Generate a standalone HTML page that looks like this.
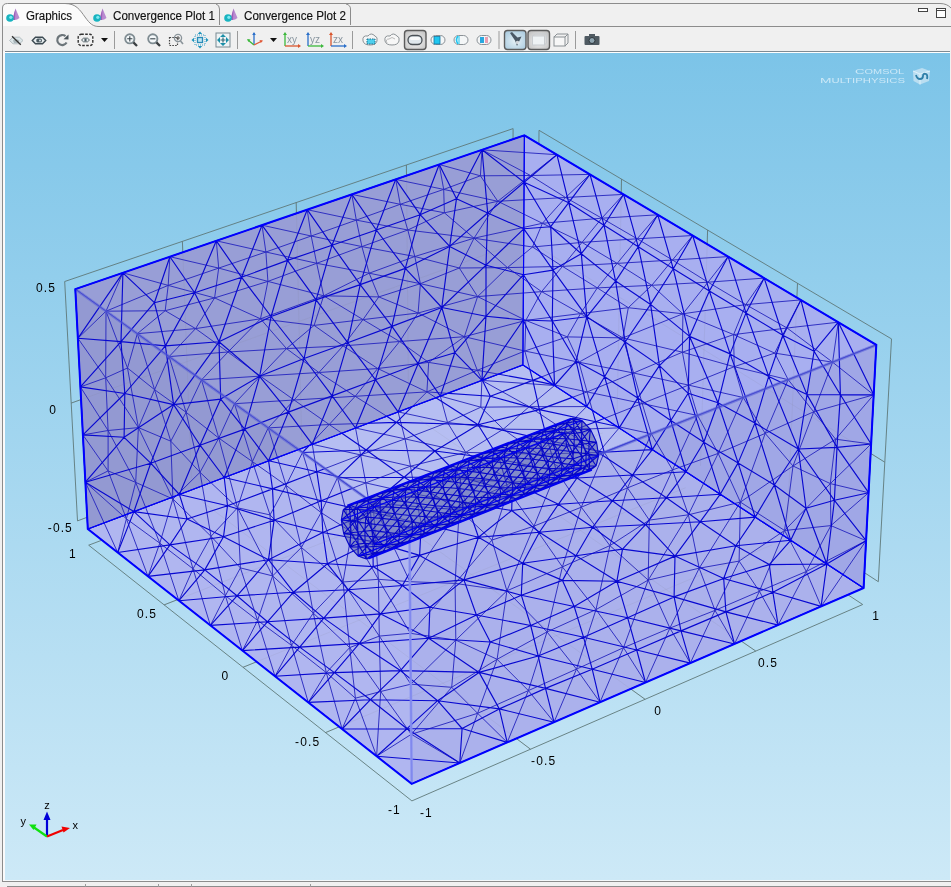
<!DOCTYPE html><html><head><meta charset="utf-8"><style>html,body{margin:0;padding:0;width:951px;height:887px;overflow:hidden;background:#f0f0f0}svg{display:block;will-change:transform}text{font-family:"Liberation Sans",sans-serif}</style></head><body><svg width="951" height="887" viewBox="0 0 951 887"><defs><linearGradient id="bg" x1="0" y1="0" x2="0" y2="1"><stop offset="0" stop-color="#7cc4e8"/><stop offset="1" stop-color="#cde9f7"/></linearGradient></defs><rect width="951" height="887" fill="#f0f0f0"/><rect x="3" y="4" width="945" height="22" fill="#f0f0f0"/><path d="M3 26 V8 Q3 4 7 4 H65 C76 4 80 10 85 17 C90 24 93 26 99 26 Z" fill="#fbfbfb"/><path d="M2.5 884 V8 Q2.5 3.5 7.5 3.5 H940 Q947 3.5 951 8" fill="none" stroke="#8c8c8c" stroke-width="1"/><path d="M65 3.5 C76 3.5 80 10 85 17 C90 24 93 26.5 99 26.5 H951" fill="none" stroke="#8c8c8c" stroke-width="1"/><path d="M219.5 25 V9 Q219.5 5 216 4" fill="none" stroke="#8c8c8c" stroke-width="1"/><path d="M350.5 25 V9 Q350.5 5 346 4" fill="none" stroke="#8c8c8c" stroke-width="1"/><g transform="translate(7,8)"><path d="M8.5 0.5 L5.5 11.5 Q9 13 12.5 10 Z" fill="#b98ad0"/><path d="M8.5 0.5 L5.5 11.5 Q7 12 8 12 Z" fill="#9c5fb8"/><circle cx="3" cy="10" r="3.8" fill="#18b4c0"/><circle cx="3.8" cy="9.3" r="1.6" fill="#7fe8f0"/></g><g transform="translate(94,8)"><path d="M8.5 0.5 L5.5 11.5 Q9 13 12.5 10 Z" fill="#b98ad0"/><path d="M8.5 0.5 L5.5 11.5 Q7 12 8 12 Z" fill="#9c5fb8"/><circle cx="3" cy="10" r="3.8" fill="#18b4c0"/><circle cx="3.8" cy="9.3" r="1.6" fill="#7fe8f0"/></g><g transform="translate(225,8)"><path d="M8.5 0.5 L5.5 11.5 Q9 13 12.5 10 Z" fill="#b98ad0"/><path d="M8.5 0.5 L5.5 11.5 Q7 12 8 12 Z" fill="#9c5fb8"/><circle cx="3" cy="10" r="3.8" fill="#18b4c0"/><circle cx="3.8" cy="9.3" r="1.6" fill="#7fe8f0"/></g><text x="26" y="20" font-size="12" fill="#111" stroke="#111" stroke-width="0.15" textLength="46" lengthAdjust="spacingAndGlyphs">Graphics</text><text x="113" y="20" font-size="12" fill="#111" stroke="#111" stroke-width="0.15" textLength="102" lengthAdjust="spacingAndGlyphs">Convergence Plot 1</text><text x="244" y="20" font-size="12" fill="#111" stroke="#111" stroke-width="0.15" textLength="102" lengthAdjust="spacingAndGlyphs">Convergence Plot 2</text><rect x="918.5" y="8.5" width="9" height="3" fill="#fff" stroke="#444" stroke-width="1"/><rect x="936.5" y="8.5" width="9" height="9" fill="#fff" stroke="#444" stroke-width="1"/><line x1="936.5" y1="10.5" x2="945.5" y2="10.5" stroke="#444" stroke-width="1"/><g><path d="M9.5 40.5 L13 37.2 H19.5 L23 40.5 L19.5 43.8 H13Z" fill="#dce6e8" stroke="#b4bec2" stroke-width="1"/><path d="M13 40.5 Q16 38 19.5 40.5 L18 43 H14Z" fill="#a9b6ba"/><line x1="12" y1="36.3" x2="20.8" y2="44.7" stroke="#333" stroke-width="1.3"/></g><g><path d="M32.3 40.5 L35.5 37.3 H42.5 L45.7 40.5 L42.5 43.7 H35.5Z" fill="#e8eef0" stroke="#3c4a52" stroke-width="1.4"/><rect x="36.3" y="38.6" width="5.6" height="3.8" rx="1.5" fill="#4a5a62"/><circle cx="40" cy="40.5" r="0.9" fill="#e8f0f4"/></g><g><path d="M65.5 36.2 A5 5 0 1 0 66.6 42.5" fill="none" stroke="#6c757a" stroke-width="2.2"/><path d="M63.5 39.2 L68.5 34.5 L68.5 39.5Z" fill="#4a545a"/></g><g><rect x="78.2" y="34.3" width="14.6" height="11.2" rx="3" fill="none" stroke="#333" stroke-width="1.4" stroke-dasharray="2.6 1.4"/><path d="M81.5 40 L83.5 38.2 H87.5 L89.5 40 L87.5 41.8 H83.5Z" fill="#e6ecee" stroke="#58646a" stroke-width="1"/><circle cx="85.5" cy="40" r="1.2" fill="#4a5860"/></g><path d="M101 38 H108 L104.5 42 Z" fill="#111"/><line x1="114.5" y1="31" x2="114.5" y2="49" stroke="#9a9a9a" stroke-width="1"/><g transform="translate(129.8,38.8)"><circle r="4.6" fill="#f4f8fa" stroke="#7f8c92" stroke-width="1.9"/><path d="M-2.6 0H2.6M0 -2.6V2.6" stroke="#3a464c" stroke-width="1.1"/><line x1="3.6" y1="3.6" x2="7.2" y2="7.2" stroke="#3a3f42" stroke-width="2.3"/></g><g transform="translate(152.8,38.8)"><circle r="4.6" fill="#f4f8fa" stroke="#7f8c92" stroke-width="1.9"/><path d="M-2.6 0H2.6" stroke="#3a464c" stroke-width="1.1"/><line x1="3.6" y1="3.6" x2="7.2" y2="7.2" stroke="#3a3f42" stroke-width="2.3"/></g><g transform="translate(176,40)"><rect x="-6.5" y="-2.5" width="8" height="8" fill="none" stroke="#444" stroke-width="1.2" stroke-dasharray="1.6 1.2"/><circle cx="2" cy="-2" r="3.6" fill="none" stroke="#8a949a" stroke-width="1.3"/><path d="M0 -2H4M2 -4V0" stroke="#555" stroke-width="1"/><line x1="4.5" y1="1" x2="7" y2="4" stroke="#8a949a" stroke-width="1.6"/></g><g transform="translate(200,40)"><rect x="-2.5" y="-2.5" width="5" height="5" fill="#bfe6f4" stroke="#2a8cb8" stroke-width="1.3"/><rect x="-5" y="-5" width="10" height="10" fill="none" stroke="#3aa0c8" stroke-width="1" stroke-dasharray="1 1"/><path d="M0 -8.5 L-2.2 -6 H2.2Z M0 8.5 L-2.2 6 H2.2Z M-8.5 0 L-6 -2.2 V2.2Z M8.5 0 L6 -2.2 V2.2Z" fill="#1e95bd"/></g><g transform="translate(223,40)"><rect x="-7" y="-7" width="14" height="14" fill="#eef4f6" stroke="#7a8a92" stroke-width="1"/><path d="M0 -6 L-3 -3 H3Z M0 6 L-3 3 H3Z M-6 0 L-3 -3 V3Z M6 0 L3 -3 V3Z" fill="#1b8fa8"/><path d="M-2.5 0H2.5M0 -2.5V2.5" stroke="#3a6a78" stroke-width="1.2"/></g><line x1="237.5" y1="31" x2="237.5" y2="49" stroke="#9a9a9a" stroke-width="1"/><g transform="translate(254,40)"><path d="M0 5 V-7" stroke="#2a6fc9" stroke-width="1.3"/><path d="M0 -8 L-1.8 -5 H1.8Z" fill="#2a6fc9"/><path d="M0 5 L-6 0" stroke="#3cb83c" stroke-width="1.3"/><path d="M-7 -1 L-3.5 -0.5 L-5.5 2Z" fill="#3cb83c"/><path d="M0 5 L8 1" stroke="#e05a3a" stroke-width="1.3"/><path d="M9 0.5 L5.5 0 L6.8 3Z" fill="#e05a3a"/></g><path d="M270 38 H277 L273.5 42 Z" fill="#111"/><g transform="translate(292,40)"><path d="M-7 -6V6" stroke="#3cb83c" stroke-width="1.3"/><path d="M-7 -8 L-9 -5 H-5Z" fill="#3cb83c"/><path d="M-7 6H7" stroke="#d9552e" stroke-width="1.3"/><path d="M9 6 L6 4 V8Z" fill="#d9552e"/><text x="-5" y="2.5" font-size="10" fill="#8a96a0">xy</text></g><g transform="translate(315,40)"><path d="M-7 -6V6" stroke="#2a6fc9" stroke-width="1.3"/><path d="M-7 -8 L-9 -5 H-5Z" fill="#2a6fc9"/><path d="M-7 6H7" stroke="#3cb83c" stroke-width="1.3"/><path d="M9 6 L6 4 V8Z" fill="#3cb83c"/><text x="-5" y="2.5" font-size="10" fill="#8a96a0">yz</text></g><g transform="translate(338,40)"><path d="M-7 -6V6" stroke="#d9552e" stroke-width="1.3"/><path d="M-7 -8 L-9 -5 H-5Z" fill="#d9552e"/><path d="M-7 6H7" stroke="#2a6fc9" stroke-width="1.3"/><path d="M9 6 L6 4 V8Z" fill="#2a6fc9"/><text x="-5" y="2.5" font-size="10" fill="#8a96a0">zx</text></g><line x1="352.5" y1="31" x2="352.5" y2="49" stroke="#9a9a9a" stroke-width="1"/><g transform="translate(370,40)"><path d="M-7 1 Q-8 -5 -2 -4 Q1 -8 5 -4 Q8 -3 7 1 Q6 5 0 5 Q-6 5 -7 1Z" fill="#f3f5f6" stroke="#8c9296" stroke-width="1"/><rect x="-3" y="-1" width="8" height="5" fill="#4fd0ee" stroke="#1a6e8c" stroke-width="1" stroke-dasharray="1.5 1"/></g><g transform="translate(392,40)"><path d="M-7 1 Q-8 -5 -2 -4 Q1 -8 5 -4 Q8 -3 7 1 Q6 5 0 5 Q-6 5 -7 1Z" fill="#f7f7f7" stroke="#8c9296" stroke-width="1"/><path d="M-5 3 Q-7 -1 -3 -1 Q0 -4 3 -1" fill="none" stroke="#aaa" stroke-width="0.8"/></g><defs><radialGradient id="pg404" cx="0.5" cy="0.55" r="0.6"><stop offset="0" stop-color="#f6f6f6"/><stop offset="1" stop-color="#c8c8c8"/></radialGradient></defs><rect x="404.5" y="30.5" width="21.5" height="19" rx="3" fill="url(#pg404)" stroke="#5c5c5c" stroke-width="1.4"/><g transform="translate(415,40)"><rect x="-7" y="-4.5" width="14" height="9" rx="4.5" fill="#dfe7ec" stroke="#4a5056" stroke-width="1.3"/><rect x="-5" y="-3" width="10" height="3" rx="1.5" fill="#fff" opacity="0.8"/></g><g transform="translate(438,40)"><rect x="-7" y="-4.5" width="14" height="9" rx="4.5" fill="#f4f6f7" stroke="#8b9196" stroke-width="1"/><rect x="-4" y="-3.5" width="6" height="7.5" fill="#1ec6f0" stroke="#1276a0" stroke-width="0.8"/></g><g transform="translate(461,40)"><rect x="-7" y="-4.5" width="14" height="9" rx="4.5" fill="#f4f6f7" stroke="#8b9196" stroke-width="1"/><path d="M-3 -4 Q-6 0 -3 4" fill="none" stroke="#1ec6f0" stroke-width="1.6"/><line x1="-2" y1="-4" x2="-2" y2="4" stroke="#1ec6f0" stroke-width="1"/></g><g transform="translate(484,40)"><rect x="-7" y="-4.5" width="14" height="9" rx="4.5" fill="#f4f6f7" stroke="#8b9196" stroke-width="1"/><rect x="-4" y="-3" width="4" height="6" fill="#2aa8e0"/><rect x="1" y="-3" width="3" height="6" fill="#e58aa0" opacity="0.8"/></g><line x1="499" y1="31" x2="499" y2="49" stroke="#9a9a9a" stroke-width="1"/><defs><radialGradient id="pg504" cx="0.5" cy="0.55" r="0.6"><stop offset="0" stop-color="#e4f0f6"/><stop offset="1" stop-color="#aecde0"/></radialGradient></defs><rect x="504.5" y="30.5" width="21.5" height="19" rx="3" fill="url(#pg504)" stroke="#5c5c5c" stroke-width="1.4"/><path d="M510 33 L512 32 L517.5 37.5 L521.5 36.5 L517 46 L515 40.5 Z" fill="#4a5866"/><circle cx="517.5" cy="42.5" r="1.8" fill="#f0f4f8" opacity="0.8"/><defs><radialGradient id="pg528" cx="0.5" cy="0.55" r="0.6"><stop offset="0" stop-color="#f4f4f4"/><stop offset="1" stop-color="#c4c4c4"/></radialGradient></defs><rect x="528" y="30.5" width="21.5" height="19" rx="3" fill="url(#pg528)" stroke="#5c5c5c" stroke-width="1.4"/><g transform="translate(538.5,40)"><rect x="-6" y="-4" width="12" height="9" fill="#eef2f4" stroke="#c8ccd0" stroke-width="1"/><path d="M-6 -4 L-4 -6 H8 V3 L6 5" fill="none" stroke="#c8ccd0" stroke-width="1"/></g><g transform="translate(561,40)"><rect x="-7" y="-3" width="11" height="9" fill="#f7f7f7" stroke="#8a9094" stroke-width="1"/><path d="M-7 -3 L-4 -6 H7 V3 L4 6 M4 -3 L7 -6" fill="none" stroke="#8a9094" stroke-width="1"/></g><line x1="575.5" y1="31" x2="575.5" y2="49" stroke="#9a9a9a" stroke-width="1"/><g transform="translate(592,40)"><rect x="-7.5" y="-4" width="15" height="9" rx="1" fill="#4f5a62"/><rect x="-3" y="-6" width="6" height="3" fill="#4f5a62"/><circle cy="0.5" r="3" fill="#8ea4b0" stroke="#2e363c" stroke-width="1"/></g><line x1="5" y1="51.5" x2="950" y2="51.5" stroke="#7f8b94" stroke-width="1"/><line x1="5" y1="52.5" x2="950" y2="52.5" stroke="#ffffff" stroke-width="1"/><rect x="5" y="53" width="945" height="827" fill="url(#bg)"/><g fill="#d4ecf9" opacity="0.9"><text x="855" y="73.6" textLength="49" lengthAdjust="spacingAndGlyphs"><tspan font-size="8">C</tspan><tspan font-size="6.6">OMSOL</tspan></text><text x="820" y="83.4" textLength="85" lengthAdjust="spacingAndGlyphs"><tspan font-size="8">M</tspan><tspan font-size="6.6">ULTIPHYSICS</tspan></text></g><g transform="translate(912,67)"><path d="M1 4 L10 1 L18 4 L17 14 L8 17.5 L1.5 14Z" fill="#c4e2f2" opacity="0.85"/><path d="M1 4 L8 7 L18 4 M8 7 L8 17.5" fill="none" stroke="#e8f6fc" stroke-width="0.8"/><path d="M4 8 Q5 12 8 12 Q11 12 11 9 Q11 6 14 7 Q16 8 15 12" fill="none" stroke="#2f7fa8" stroke-width="1.8"/></g><path d="M77.5 520.9L64.7 281.5L513.1 128.6L512.0 357.7ZM878.3 581.7L891.5 338.9L539.0 130.3L537.2 359.5ZM411.9 800.9L88.7 545.2L522.8 380.4L862.7 604.5Z" fill="none" stroke="#5f7878" stroke-width="0.9"/><path d="M191.4 478.1L182.4 241.4M787.5 522.5L797.5 283.2M530.5 749.2L202.5 502.0M325.5 732.6L772.2 544.8M301.6 436.7L296.2 202.5M700.5 465.9L707.6 230.0M645.1 699.3L312.6 460.2M243.0 667.3L685.6 487.7M408.5 396.6L406.4 165.0M617.2 411.6L621.5 179.1M755.8 651.1L419.4 419.7M164.1 604.9L602.5 433.0M71.2 403.1L512.6 244.9M884.8 462.2L538.1 246.6" fill="none" stroke="#5f7878" stroke-width="0.9"/><text x="36.1" y="292.0" font-size="12" letter-spacing="1.1" fill="#000">0.5</text><text x="49.3" y="413.9" font-size="12" letter-spacing="1.1" fill="#000">0</text><text x="47.8" y="531.8" font-size="12" letter-spacing="1.1" fill="#000">-0.5</text><text x="69.0" y="557.9" font-size="12" letter-spacing="1.1" fill="#000">1</text><text x="137.0" y="617.9" font-size="12" letter-spacing="1.1" fill="#000">0.5</text><text x="221.4" y="680.0" font-size="12" letter-spacing="1.1" fill="#000">0</text><text x="295.1" y="746.1" font-size="12" letter-spacing="1.1" fill="#000">-0.5</text><text x="388.0" y="814.3" font-size="12" letter-spacing="1.1" fill="#000">-1</text><text x="420.0" y="817.4" font-size="12" letter-spacing="1.1" fill="#000">-1</text><text x="531.1" y="765.0" font-size="12" letter-spacing="1.1" fill="#000">-0.5</text><text x="654.3" y="715.0" font-size="12" letter-spacing="1.1" fill="#000">0</text><text x="758.0" y="667.0" font-size="12" letter-spacing="1.1" fill="#000">0.5</text><text x="872.2" y="619.8" font-size="12" letter-spacing="1.1" fill="#000">1</text><polygon points="75.3,289.1 298.4,449.6 87.8,529.0" fill="#9399d2"/><polygon points="87.8,529.0 298.4,449.6 409.4,529.4 411.7,783.8" fill="#b0b6f0"/><polygon points="75.3,289.1 524.4,135.3 522.9,364.9 298.4,449.6" fill="#989ed6"/><polygon points="524.4,135.3 876.3,344.9 636.9,439.5 522.9,364.9" fill="#a8aff0"/><polygon points="522.9,364.9 298.4,449.6 409.4,529.4 636.9,439.5" fill="#b6bef2"/><polygon points="876.3,344.9 863.6,588.0 636.9,439.5" fill="#a0a7e6"/><polygon points="409.4,529.4 636.9,439.5 863.6,588.0 411.7,783.8" fill="#abb1ec"/><defs><clipPath id="cR5"><polygon points="522.9,364.9 298.4,449.6 409.4,529.4 636.9,439.5"/></clipPath><clipPath id="cR34"><polygon points="75.3,289.1 524.4,135.3 522.9,364.9 298.4,449.6"/><polygon points="524.4,135.3 876.3,344.9 636.9,439.5 522.9,364.9"/></clipPath><clipPath id="cR27"><polygon points="87.8,529.0 298.4,449.6 409.4,529.4 411.7,783.8"/><polygon points="409.4,529.4 636.9,439.5 863.6,588.0 411.7,783.8"/></clipPath></defs><path d="M218.8 438.1L252.4 461.6M270.0 514.9L301.4 547.5M291.5 645.3L326.3 672.6M159.8 543.2L172.9 499.0M148.0 576.4L117.7 552.5M108.1 430.5L135.7 482.4M126.4 518.8L135.7 482.4M257.6 620.4L225.4 595.7M105.7 377.8L138.4 427.6M268.2 427.9L252.4 461.6M257.6 620.4L240.4 567.9M373.1 503.3L409.9 581.7M169.1 356.6L201.5 379.9M355.4 698.2L349.7 647.6M193.0 568.8L225.4 595.7M342.1 729.0L355.4 698.2M77.9 338.3L75.3 289.1M117.7 552.5L87.8 529.0M286.1 485.4L270.0 514.9M75.3 289.1L106.0 311.2M410.4 633.3L378.4 579.3M135.7 482.4L172.9 499.0M154.6 389.7L138.4 427.6M178.9 600.7L159.8 543.2M117.7 552.5L126.4 518.8M108.1 430.5L105.7 377.8M411.3 734.3L380.7 691.5M252.4 461.6L270.0 514.9M218.8 438.1L237.5 507.8M82.9 434.9L108.1 430.5M308.3 702.4L291.5 645.3M106.0 311.2L137.3 333.7M380.7 691.5L355.4 698.2M343.0 582.0L313.3 613.1M201.5 379.9L218.8 438.1M240.4 567.9L237.5 507.8M82.9 434.9L80.4 386.9M302.5 452.5L337.5 477.7M321.1 512.6L343.0 582.0M257.6 620.4L291.5 645.3M302.5 452.5L321.1 512.6M178.9 600.7L193.0 568.8M80.4 386.9L77.9 338.3M378.4 579.3L343.0 582.0M355.4 698.2L326.3 672.6M225.4 595.7L211.0 536.3M272.6 575.9L313.3 613.1M321.1 512.6L351.6 532.1M138.4 427.6L172.9 499.0M105.7 377.8L127.5 368.0M127.5 368.0L138.4 427.6M337.5 477.7L373.1 503.3M210.4 625.4L225.4 595.7M170.8 441.2L200.0 472.3M186.1 412.3L200.0 472.3M82.9 434.9L108.1 470.9M286.1 485.4L301.4 547.5M201.5 379.9L234.5 403.7M378.4 579.3L351.6 532.1M373.1 503.3L409.4 529.4M343.0 582.0L301.4 547.5M137.3 333.7L127.5 368.0M154.6 389.7L170.8 441.2M380.7 691.5L349.7 647.6M308.3 702.4L326.3 672.6M108.1 470.9L126.4 518.8M234.5 403.7L268.2 427.9M326.3 672.6L349.7 647.6M326.3 672.6L313.3 613.1M211.0 536.3L200.0 472.3M270.0 514.9L237.5 507.8M275.0 676.3L257.6 620.4M154.6 389.7L127.5 368.0M137.3 333.7L154.6 389.7M409.4 529.4L409.9 581.7M240.4 567.9L272.6 575.9M225.4 595.7L240.4 567.9M379.3 636.1L343.0 582.0M148.0 576.4L126.4 518.8M159.8 543.2L126.4 518.8M409.9 581.7L410.4 633.3M80.4 386.9L105.7 377.8M268.2 427.9L302.5 452.5M77.9 338.3L106.0 311.2M373.1 503.3L351.6 532.1M409.9 581.7L378.4 579.3M268.2 427.9L286.1 485.4M137.3 333.7L169.1 356.6M410.4 633.3L410.8 684.2M410.4 633.3L379.3 636.1M410.8 684.2L380.7 691.5M201.5 379.9L186.1 412.3M349.7 647.6L343.0 582.0M172.9 499.0L200.0 472.3M411.7 783.8L411.3 734.3M240.4 567.9L211.0 536.3M242.4 650.6L210.4 625.4M169.1 356.6L154.6 389.7M210.4 625.4L193.0 568.8M291.5 645.3L272.6 575.9M376.6 756.2L342.1 729.0M275.0 676.3L291.5 645.3M234.5 403.7L252.4 461.6M410.8 684.2L411.3 734.3M77.9 338.3L105.7 377.8M159.8 543.2L193.0 568.8M85.4 482.2L126.4 518.8M211.0 536.3L237.5 507.8M108.1 430.5L108.1 470.9M270.0 514.9L272.6 575.9M106.0 311.2L105.7 377.8M376.6 756.2L355.4 698.2M218.8 438.1L200.0 472.3M193.0 568.8L172.9 499.0M342.1 729.0L308.3 702.4M351.6 532.1L343.0 582.0M242.4 650.6L225.4 595.7M85.4 482.2L108.1 470.9M321.1 512.6L286.1 485.4M301.4 547.5L272.6 575.9M308.3 702.4L275.0 676.3M373.1 503.3L378.4 579.3M211.0 536.3L172.9 499.0M321.1 512.6L301.4 547.5M106.0 311.2L127.5 368.0M186.1 412.3L170.8 441.2M342.1 729.0L326.3 672.6M291.5 645.3L313.3 613.1M117.7 552.5L85.4 482.2M170.8 441.2L138.4 427.6M380.7 691.5L379.3 636.1M242.4 650.6L257.6 620.4M148.0 576.4L159.8 543.2M237.5 507.8L200.0 472.3M379.3 636.1L378.4 579.3M257.6 620.4L272.6 575.9M379.3 636.1L349.7 647.6M275.0 676.3L242.4 650.6M80.4 386.9L108.1 430.5M376.6 756.2L380.7 691.5M108.1 470.9L135.7 482.4M411.7 783.8L376.6 756.2M87.8 529.0L85.4 482.2M286.1 485.4L252.4 461.6M234.5 403.7L218.8 438.1M302.5 452.5L286.1 485.4M252.4 461.6L237.5 507.8M337.5 477.7L351.6 532.1M349.7 647.6L313.3 613.1M210.4 625.4L178.9 600.7M186.1 412.3L154.6 389.7M376.6 756.2L411.3 734.3M301.4 547.5L313.3 613.1M186.1 412.3L218.8 438.1M272.6 575.9L237.5 507.8M159.8 543.2L135.7 482.4M169.1 356.6L186.1 412.3M193.0 568.8L211.0 536.3M337.5 477.7L321.1 512.6M85.4 482.2L82.9 434.9M170.8 441.2L172.9 499.0M108.1 430.5L138.4 427.6M410.8 684.2L379.3 636.1M178.9 600.7L148.0 576.4M135.7 482.4L138.4 427.6M451.7 687.3L497.1 659.3M699.2 568.2L740.4 502.1M765.2 433.4L740.4 502.1M672.5 469.9L649.3 520.1M743.2 397.5L718.2 453.4M623.5 647.7L648.2 580.1M778.1 625.1L821.1 606.4M669.9 628.1L623.5 647.7M554.0 722.2L576.5 669.1M788.2 379.7L813.7 411.8M759.4 591.3L739.1 561.1M554.0 722.2L528.4 690.6M451.7 687.3L455.8 640.1M459.2 509.7L409.9 581.7M596.0 609.6L562.4 566.9M743.2 397.5L697.6 415.5M778.1 625.1L759.4 591.3M715.0 610.4L739.1 561.1M873.7 394.8L876.3 344.9M821.1 606.4L863.6 588.0M576.5 669.1L528.4 690.6M759.4 591.3L784.6 530.5M690.3 663.1L715.0 610.4M651.3 433.8L627.5 487.9M868.6 492.7L830.9 525.6M528.4 690.6L547.0 631.9M645.5 682.5L669.9 628.1M876.3 344.9L832.6 362.2M596.0 609.6L547.0 631.9M813.7 411.8L835.6 439.2M459.2 509.7L455.1 583.4M459.8 763.0L477.6 713.3M581.3 507.2L627.5 487.9M411.3 734.3L451.7 687.3M455.8 640.1L506.9 590.8M651.3 433.8L672.5 469.9M868.6 492.7L830.3 483.6M627.5 487.9L649.3 520.1M576.5 669.1L623.5 647.7M508.3 490.3L491.9 540.1M832.6 362.2L788.2 379.7M813.7 411.8L765.2 433.4M410.8 684.2L455.8 640.1M793.0 466.0L740.4 502.1M562.4 566.9L547.0 631.9M778.1 625.1L806.3 571.5M868.6 492.7L871.1 444.0M609.9 545.6L648.2 580.1M556.6 471.2L508.3 490.3M830.3 483.6L835.6 439.2M556.6 471.2L534.0 526.1M871.1 444.0L873.7 394.8M491.9 540.1L506.9 590.8M813.7 411.8L793.0 466.0M806.3 571.5L759.4 591.3M508.3 490.3L459.2 509.7M477.6 713.3L497.1 659.3M873.7 394.8L813.7 411.8M718.2 453.4L740.4 502.1M697.6 415.5L651.3 433.8M669.9 628.1L648.2 580.1M648.2 580.1L688.4 514.8M459.2 509.7L409.4 529.4M497.1 659.3L547.0 631.9M672.5 469.9L627.5 487.9M832.6 362.2L813.7 411.8M866.1 540.7L806.3 571.5M507.2 742.4L528.4 690.6M651.3 433.8L604.3 452.4M506.9 590.8L497.1 659.3M830.3 483.6L830.9 525.6M534.0 526.1L562.4 566.9M830.3 483.6L793.0 466.0M734.5 644.0L759.4 591.3M600.0 702.2L576.5 669.1M788.2 379.7L765.2 433.4M455.1 583.4L455.8 640.1M739.1 561.1L740.4 502.1M409.4 529.4L409.9 581.7M596.0 609.6L609.9 545.6M866.1 540.7L830.9 525.6M409.9 581.7L410.4 633.3M699.2 568.2L648.2 580.1M715.0 610.4L699.2 568.2M604.3 452.4L556.6 471.2M873.7 394.8L832.6 362.2M411.3 734.3L477.6 713.3M534.0 526.1L506.9 590.8M581.3 507.2L609.9 545.6M830.3 483.6L784.6 530.5M734.5 644.0L715.0 610.4M604.3 452.4L627.5 487.9M788.2 379.7L743.2 397.5M410.4 633.3L410.8 684.2M410.4 633.3L455.1 583.4M410.8 684.2L451.7 687.3M410.4 633.3L455.8 640.1M688.4 514.8L740.4 502.1M411.7 783.8L411.3 734.3M697.6 415.5L672.5 469.9M507.2 742.4L477.6 713.3M699.2 568.2L688.4 514.8M645.5 682.5L690.3 663.1M806.3 571.5L830.9 525.6M871.1 444.0L835.6 439.2M743.2 397.5L765.2 433.4M604.3 452.4L581.3 507.2M459.8 763.0L507.2 742.4M669.9 628.1L715.0 610.4M410.8 684.2L411.3 734.3M576.5 669.1L596.0 609.6M765.2 433.4L793.0 466.0M784.6 530.5L739.1 561.1M697.6 415.5L718.2 453.4M821.1 606.4L806.3 571.5M534.0 526.1L491.9 540.1M506.9 590.8L562.4 566.9M806.3 571.5L784.6 530.5M718.2 453.4L688.4 514.8M507.2 742.4L554.0 722.2M873.7 394.8L835.6 439.2M830.9 525.6L784.6 530.5M455.1 583.4L506.9 590.8M784.6 530.5L740.4 502.1M554.0 722.2L600.0 702.2M477.6 713.3L451.7 687.3M506.9 590.8L547.0 631.9M690.3 663.1L669.9 628.1M821.1 606.4L866.1 540.7M649.3 520.1L609.9 545.6M528.4 690.6L497.1 659.3M600.0 702.2L623.5 647.7M534.0 526.1L581.3 507.2M596.0 609.6L648.2 580.1M672.5 469.9L718.2 453.4M623.5 647.7L596.0 609.6M871.1 444.0L830.3 483.6M600.0 702.2L645.5 682.5M835.6 439.2L793.0 466.0M562.4 566.9L609.9 545.6M459.2 509.7L491.9 540.1M581.3 507.2L562.4 566.9M411.7 783.8L459.8 763.0M455.8 640.1L497.1 659.3M759.4 591.3L715.0 610.4M863.6 588.0L866.1 540.7M649.3 520.1L648.2 580.1M455.1 583.4L491.9 540.1M576.5 669.1L547.0 631.9M690.3 663.1L734.5 644.0M645.5 682.5L623.5 647.7M459.8 763.0L411.3 734.3M699.2 568.2L739.1 561.1M477.6 713.3L528.4 690.6M409.9 581.7L455.1 583.4M672.5 469.9L688.4 514.8M556.6 471.2L581.3 507.2M508.3 490.3L534.0 526.1M866.1 540.7L868.6 492.7M649.3 520.1L688.4 514.8M765.2 433.4L718.2 453.4M669.9 628.1L699.2 568.2M627.5 487.9L609.9 545.6M793.0 466.0L784.6 530.5M734.5 644.0L778.1 625.1" stroke="#2a2ac0" stroke-width="0.95" fill="none" opacity="1"/><path d="M465.7 452.4L454.8 478.7M645.5 682.5L636.7 650.0M778.1 625.1L821.1 606.4M133.9 511.6L170.0 544.9M681.0 630.9L674.1 596.9M720.3 494.2L686.0 471.7M480.8 407.2L503.3 429.2M686.0 471.7L652.3 449.6M558.4 504.3L592.6 527.3M370.5 699.7L334.4 672.6M421.3 523.4L419.6 555.4M462.1 728.5L407.0 728.7M227.5 505.7L274.1 520.2M675.0 556.1L622.5 549.1M681.0 630.9L636.7 650.0M440.3 396.1L398.1 411.9M490.3 642.0L476.4 615.0M275.0 676.3L299.7 647.1M674.1 596.9L627.6 617.7M372.8 541.6L419.6 555.4M592.2 669.2L545.5 688.4M558.4 504.3L511.7 510.5M666.4 497.7L612.3 500.8M275.0 676.3L334.4 672.6M133.9 511.6L117.7 552.5M538.2 454.1L503.3 429.2M690.3 663.1L636.7 650.0M583.6 637.3L530.7 625.5M583.6 637.3L574.2 606.5M507.2 742.4L462.1 728.5M312.3 444.3L360.6 454.9M755.2 517.1L735.8 545.8M616.9 581.2L622.5 549.1M577.0 478.0L612.3 500.8M148.0 576.4L170.0 544.9M538.2 656.0L490.3 642.0M755.2 517.1L700.3 521.7M652.3 449.6L598.3 452.5M465.7 452.4L512.5 482.1M674.1 596.9L616.9 581.2M645.5 682.5L592.2 669.2M481.9 380.4L440.3 396.1M133.9 511.6L187.1 519.0M415.1 494.0L466.8 503.4M360.6 454.9L410.5 466.2M204.8 569.9L268.5 559.7M380.8 613.9L428.7 638.2M790.7 540.3L769.3 564.6M380.8 613.9L402.4 585.5M600.0 702.2L545.5 688.4M179.4 494.5L133.9 511.6M574.2 606.5L562.5 580.4M735.8 545.8L675.0 556.1M821.1 606.4L772.9 592.3M133.9 511.6L87.8 529.0M415.1 494.0L370.5 512.0M512.5 482.1L454.8 478.7M204.8 569.9L237.0 595.8M512.5 482.1L466.8 503.4M507.2 742.4L554.0 722.2M521.3 595.2L463.9 579.9M268.5 559.7L274.1 520.2M398.1 411.9L405.0 438.9M554.0 722.2L600.0 702.2M242.4 650.6L275.0 676.3M274.1 520.2L322.8 532.5M577.0 478.0L512.5 482.1M821.1 606.4L826.8 564.0M275.0 676.3L308.3 702.4M666.4 497.7L645.6 524.7M636.7 650.0L583.6 637.3M316.8 471.7L365.8 482.9M360.6 454.9L405.0 438.9M863.6 588.0L826.8 564.0M359.4 643.4L400.4 670.6M440.3 396.1L447.5 422.5M268.5 559.7L327.4 563.8M359.4 643.4L428.7 638.2M538.2 656.0L583.6 637.3M407.0 728.7L437.6 700.7M478.5 537.3L463.9 579.9M327.4 563.8L373.2 566.6M577.0 478.0L558.4 504.3M735.8 545.8L700.3 521.7M666.4 497.7L700.3 521.7M465.7 452.4L538.2 454.1M170.0 544.9L223.5 536.7M735.8 545.8L723.7 578.5M224.2 477.5L227.5 505.7M479.1 672.4L490.3 642.0M365.8 482.9L321.2 500.8M466.8 503.4L421.3 523.4M821.1 606.4L863.6 588.0M342.1 729.0L370.5 699.7M686.0 471.7L632.4 475.0M400.4 670.6L428.7 638.2M372.8 541.6L373.2 566.6M348.1 589.8L402.4 585.5M734.5 644.0L725.9 611.9M723.7 578.5L674.1 596.9M545.5 688.4L538.2 656.0M511.7 510.5L466.8 503.4M539.4 532.2L522.7 563.3M365.8 482.9L415.1 494.0M632.4 475.0L666.4 497.7M652.3 449.6L619.2 427.9M437.6 700.7L479.1 672.4M478.5 537.3L419.6 555.4M210.4 625.4L237.0 595.8M529.2 406.7L503.3 429.2M686.0 471.7L666.4 497.7M348.1 589.8L327.4 563.8M592.2 669.2L583.6 637.3M237.0 595.8L293.5 592.2M545.5 688.4L479.1 672.4M723.7 578.5L675.0 556.1M398.1 411.9L355.5 428.0M563.7 429.7L598.3 452.5M359.4 643.4L323.8 618.1M210.4 625.4L267.4 621.8M355.5 428.0L312.3 444.3M322.8 532.5L327.4 563.8M529.2 406.7L480.8 407.2M322.8 532.5L372.8 541.6M554.0 722.2L499.3 708.9M321.2 500.8L370.5 512.0M342.1 729.0L407.0 728.7M735.8 545.8L769.3 564.6M334.4 672.6L400.4 670.6M645.6 524.7L592.6 527.3M87.8 529.0L117.7 552.5M627.6 617.7L583.6 637.3M462.1 728.5L437.6 700.7M117.7 552.5L148.0 576.4M539.4 532.2L478.5 537.3M511.7 510.5L478.5 537.3M772.9 592.3L723.7 578.5M428.7 638.2L476.4 615.0M429.9 607.2L476.4 615.0M293.5 592.2L348.1 589.8M720.3 494.2L700.3 521.7M327.4 563.8L372.8 541.6M645.5 682.5L690.3 663.1M268.6 460.8L272.5 488.9M530.7 625.5L574.2 606.5M267.4 621.8L237.0 595.8M373.2 566.6L402.4 585.5M370.5 512.0L421.3 523.4M267.4 621.8L323.8 618.1M499.3 708.9L545.5 688.4M499.3 708.9L437.6 700.7M428.7 638.2L490.3 642.0M563.7 429.7L538.2 454.1M428.7 638.2L429.9 607.2M187.1 519.0L223.5 536.7M612.3 500.8L558.4 504.3M454.8 478.7L466.8 503.4M586.6 406.6L529.2 406.7M554.5 385.5L481.9 380.4M530.7 625.5L521.3 595.2M373.2 566.6L419.6 555.4M600.0 702.2L645.5 682.5M187.1 519.0L227.5 505.7M223.5 536.7L274.1 520.2M187.1 519.0L170.0 544.9M447.5 422.5L465.7 452.4M616.9 581.2L576.0 555.7M402.4 585.5L463.9 579.9M308.3 702.4L342.1 729.0M576.0 555.7L539.4 532.2M321.2 500.8L322.8 532.5M554.0 722.2L545.5 688.4M826.8 564.0L790.7 540.3M370.5 512.0L372.8 541.6M405.0 438.9L410.5 466.2M772.9 592.3L769.3 564.6M447.5 422.5L405.0 438.9M293.5 592.2L323.8 618.1M616.9 581.2L574.2 606.5M447.5 422.5L503.3 429.2M586.6 406.6L554.5 385.5M334.4 672.6L359.4 643.4M421.3 523.4L478.5 537.3M370.5 699.7L400.4 670.6M619.2 427.9L598.3 452.5M538.2 454.1L512.5 482.1M481.9 380.4L480.8 407.2M405.0 438.9L465.7 452.4M410.5 466.2L415.1 494.0M223.5 536.7L268.5 559.7M681.0 630.9L627.6 617.7M447.5 422.5L480.8 407.2M538.2 656.0L530.7 625.5M402.4 585.5L419.6 555.4M299.7 647.1L323.8 618.1M272.5 488.9L227.5 505.7M558.4 504.3L512.5 482.1M370.5 699.7L437.6 700.7M538.2 454.1L577.0 478.0M690.3 663.1L681.0 630.9M675.0 556.1L616.9 581.2M681.0 630.9L725.9 611.9M522.7 563.3L463.9 579.9M299.7 647.1L267.4 621.8M355.5 428.0L405.0 438.9M299.7 647.1L359.4 643.4M465.7 452.4L410.5 466.2M619.2 427.9L563.7 429.7M636.7 650.0L627.6 617.7M674.1 596.9L675.0 556.1M179.4 494.5L227.5 505.7M592.6 527.3L622.5 549.1M562.5 580.4L522.7 563.3M598.3 452.5L577.0 478.0M521.3 595.2L562.5 580.4M312.3 444.3L268.6 460.8M242.4 650.6L267.4 621.8M148.0 576.4L204.8 569.9M632.4 475.0L612.3 500.8M299.7 647.1L334.4 672.6M652.3 449.6L632.4 475.0M619.2 427.9L586.6 406.6M272.5 488.9L316.8 471.7M769.3 564.6L723.7 578.5M415.1 494.0L421.3 523.4M521.3 595.2L522.7 563.3M360.6 454.9L365.8 482.9M398.1 411.9L447.5 422.5M380.8 613.9L429.9 607.2M365.8 482.9L370.5 512.0M242.4 650.6L299.7 647.1M465.7 452.4L503.3 429.2M372.8 541.6L421.3 523.4M598.3 452.5L538.2 454.1M627.6 617.7L574.2 606.5M204.8 569.9L223.5 536.7M227.5 505.7L223.5 536.7M778.1 625.1L725.9 611.9M521.3 595.2L476.4 615.0M376.6 756.2L407.0 728.7M790.7 540.3L735.8 545.8M622.5 549.1L576.0 555.7M117.7 552.5L170.0 544.9M148.0 576.4L178.9 600.7M359.4 643.4L380.8 613.9M478.5 537.3L522.7 563.3M459.8 763.0L407.0 728.7M700.3 521.7L675.0 556.1M179.4 494.5L187.1 519.0M690.3 663.1L734.5 644.0M476.4 615.0L463.9 579.9M316.8 471.7L321.2 500.8M479.1 672.4L400.4 670.6M479.1 672.4L428.7 638.2M204.8 569.9L170.0 544.9M826.8 564.0L769.3 564.6M632.4 475.0L598.3 452.5M700.3 521.7L645.6 524.7M459.8 763.0L462.1 728.5M355.5 428.0L360.6 454.9M632.4 475.0L577.0 478.0M308.3 702.4L334.4 672.6M348.1 589.8L380.8 613.9M574.2 606.5L521.3 595.2M511.7 510.5L539.4 532.2M268.5 559.7L322.8 532.5M600.0 702.2L592.2 669.2M322.8 532.5L370.5 512.0M437.6 700.7L400.4 670.6M342.1 729.0L376.6 756.2M645.6 524.7L612.3 500.8M323.8 618.1L380.8 613.9M224.2 477.5L272.5 488.9M411.7 783.8L376.6 756.2M415.1 494.0L454.8 478.7M778.1 625.1L772.9 592.3M627.6 617.7L616.9 581.2M790.7 540.3L755.2 517.1M512.5 482.1L511.7 510.5M772.9 592.3L725.9 611.9M755.2 517.1L720.3 494.2M407.0 728.7L370.5 699.7M459.8 763.0L376.6 756.2M466.8 503.4L478.5 537.3M725.9 611.9L674.1 596.9M592.2 669.2L538.2 656.0M323.8 618.1L348.1 589.8M554.5 385.5L522.9 364.9M348.1 589.8L373.2 566.6M267.4 621.8L293.5 592.2M360.6 454.9L316.8 471.7M554.5 385.5L529.2 406.7M522.9 364.9L481.9 380.4M237.0 595.8L268.5 559.7M826.8 564.0L772.9 592.3M410.5 466.2L454.8 478.7M563.7 429.7L503.3 429.2M429.9 607.2L463.9 579.9M612.3 500.8L592.6 527.3M321.2 500.8L274.1 520.2M308.3 702.4L370.5 699.7M440.3 396.1L480.8 407.2M268.6 460.8L224.2 477.5M586.6 406.6L563.7 429.7M645.6 524.7L675.0 556.1M224.2 477.5L179.4 494.5M272.5 488.9L274.1 520.2M645.6 524.7L622.5 549.1M479.1 672.4L538.2 656.0M312.3 444.3L316.8 471.7M499.3 708.9L479.1 672.4M459.8 763.0L507.2 742.4M178.9 600.7L237.0 595.8M429.9 607.2L402.4 585.5M720.3 494.2L666.4 497.7M293.5 592.2L327.4 563.8M592.2 669.2L636.7 650.0M419.6 555.4L463.9 579.9M558.4 504.3L539.4 532.2M268.6 460.8L316.8 471.7M734.5 644.0L681.0 630.9M462.1 728.5L499.3 708.9M481.9 380.4L529.2 406.7M530.7 625.5L476.4 615.0M507.2 742.4L499.3 708.9M576.0 555.7L562.5 580.4M616.9 581.2L562.5 580.4M293.5 592.2L268.5 559.7M725.9 611.9L723.7 578.5M592.6 527.3L576.0 555.7M411.7 783.8L459.8 763.0M592.6 527.3L539.4 532.2M272.5 488.9L321.2 500.8M530.7 625.5L490.3 642.0M178.9 600.7L210.4 625.4M410.5 466.2L365.8 482.9M563.7 429.7L529.2 406.7M178.9 600.7L204.8 569.9M210.4 625.4L242.4 650.6M576.0 555.7L522.7 563.3M734.5 644.0L778.1 625.1" stroke="#2a2ac0" stroke-width="0.95" fill="none" opacity="1" clip-path="url(#cR5)"/><path d="M294.1 400.0L318.9 372.5M343.1 345.9L363.0 319.6M532.5 247.0L474.0 238.2M580.5 313.6L541.6 291.6M651.3 433.8L642.2 403.5M788.2 379.7L832.6 362.2M311.2 236.0L316.7 263.3M628.3 307.7L622.9 337.9M787.1 328.0L745.8 304.6M499.4 459.2L547.4 440.2M508.3 490.3L499.4 459.2M637.2 238.8L582.0 242.4M728.1 256.6L692.7 235.5M195.6 328.6L214.6 297.9M286.5 348.6L343.1 345.9M165.2 310.7L168.2 285.4M377.7 368.5L343.1 345.9M524.8 351.0L567.3 336.9M556.6 471.2L547.4 440.2M692.7 235.5L657.8 214.8M443.7 189.4L400.2 204.3M490.3 396.3L426.9 391.9M443.7 189.4L480.4 175.8M623.6 194.4L601.8 218.2M672.5 260.0L651.8 285.3M363.0 319.6L418.1 313.0M542.4 223.3L532.5 247.0M682.9 313.8L628.3 307.7M439.2 164.5L395.7 179.4M267.9 281.4L316.7 263.3M267.9 281.4L323.7 295.8M234.5 403.7L260.3 376.1M165.2 310.7L214.6 297.9M745.8 304.6L708.0 282.2M490.3 396.3L477.3 370.3M265.9 252.0L316.7 263.3M169.9 256.7L218.7 268.1M355.2 396.3L426.9 391.9M651.3 433.8L595.7 421.8M122.9 272.8L106.0 311.2M672.5 260.0L617.2 263.4M318.9 372.5L343.1 345.9M697.6 415.5L642.2 403.5M547.4 440.2L478.1 424.8M565.6 197.5L497.8 201.3M642.2 403.5L587.1 391.9M459.3 268.0L420.4 283.7M672.5 260.0L637.2 238.8M482.0 149.8L439.2 164.5M420.4 283.7L477.6 296.6M788.2 379.7L734.2 366.7M363.0 319.6L399.6 341.5M361.9 246.6L414.8 256.5M323.7 295.8L363.0 319.6M764.2 278.1L745.8 304.6M377.7 368.5L428.7 362.4M169.9 256.7L122.9 272.8M444.4 212.8L497.8 201.3M122.9 272.8L75.3 289.1M578.9 362.2L532.8 380.4M578.9 362.2L567.3 336.9M508.3 490.3L556.6 471.2M369.2 273.2L420.4 283.7M556.6 471.2L604.3 452.4M234.5 403.7L268.2 427.9M459.2 509.7L460.6 477.1M764.2 278.1L708.0 282.2M832.6 362.2L838.3 322.2M268.2 427.9L302.5 452.5M218.7 268.1L168.2 285.4M642.2 403.5L633.6 373.0M404.1 477.3L434.9 451.0M567.3 336.9L525.8 320.4M633.6 373.0L578.9 362.2M539.4 409.6L532.8 380.4M622.9 337.9L567.3 336.9M876.3 344.9L838.3 322.2M106.0 311.2L165.2 310.7M323.7 295.8L314.1 325.4M395.7 179.4L400.2 204.3M260.5 318.8L286.5 348.6M418.1 313.0L477.6 296.6M774.7 353.1L733.6 334.6M426.9 391.9L428.7 362.4M228.0 352.0L195.6 328.6M228.0 352.0L260.3 376.1M218.7 268.1L214.6 297.9M597.3 287.9L580.5 313.6M578.9 362.2L622.9 337.9M651.8 285.3L597.3 287.9M688.5 385.1L734.2 366.7M216.3 240.8L265.9 252.0M329.2 424.5L294.1 400.0M351.8 194.4L356.3 220.1M329.2 424.5L396.5 422.4M337.5 477.7L404.1 477.3M832.6 362.2L876.3 344.9M218.7 268.1L265.9 252.0M692.7 235.5L637.2 238.8M474.0 238.2L507.4 267.6M407.8 230.0L474.0 238.2M597.3 287.9L541.6 291.6M539.4 409.6L587.1 391.9M373.1 503.3L404.1 477.3M361.9 246.6L316.7 263.3M395.7 179.4L443.7 189.4M414.8 256.5L420.4 283.7M587.1 391.9L578.9 362.2M657.8 214.8L623.6 194.4M530.5 175.5L480.4 175.8M316.7 263.3L323.7 295.8M418.1 313.0L464.4 336.7M459.2 509.7L404.1 477.3M562.5 266.4L541.6 291.6M434.9 451.0L478.1 424.8M478.1 424.8L426.9 391.9M590.0 174.4L530.5 175.5M407.8 230.0L414.8 256.5M428.7 362.4L399.6 341.5M633.6 373.0L587.1 391.9M539.4 409.6L490.3 396.3M601.8 218.2L582.0 242.4M633.6 373.0L622.9 337.9M395.7 179.4L351.8 194.4M499.4 459.2L434.9 451.0M366.2 450.0L434.9 451.0M351.8 194.4L307.2 209.7M733.6 334.6L682.4 352.2M595.7 421.8L539.4 409.6M75.3 289.1L106.0 311.2M400.2 204.3L444.4 212.8M532.8 380.4L524.8 351.0M787.1 328.0L733.6 334.6M106.0 311.2L137.3 333.7M169.1 356.6L195.6 328.6M260.3 376.1L318.9 372.5M399.6 341.5L418.1 313.0M329.2 424.5L366.2 450.0M396.5 422.4L355.2 396.3M595.7 421.8L642.2 403.5M316.7 263.3L369.2 273.2M774.7 353.1L734.2 366.7M651.3 433.8L697.6 415.5M745.8 304.6L733.6 334.6M734.2 366.7L733.6 334.6M434.9 451.0L396.5 422.4M745.8 304.6L682.9 313.8M582.0 242.4L562.5 266.4M628.3 307.7L580.5 313.6M838.3 322.2L787.1 328.0M400.2 204.3L407.8 230.0M356.3 220.1L311.2 236.0M477.3 370.3L428.7 362.4M556.6 471.2L499.4 459.2M302.5 452.5L366.2 450.0M682.4 352.2L622.9 337.9M580.5 313.6L525.8 320.4M556.9 154.7L482.0 149.8M428.7 362.4L464.4 336.7M604.3 452.4L651.3 433.8M682.9 313.8L651.8 285.3M260.3 376.1L294.1 400.0M414.8 256.5L369.2 273.2M307.2 209.7L311.2 236.0M541.6 291.6L477.6 296.6M302.5 452.5L337.5 477.7M728.1 256.6L708.0 282.2M490.3 396.3L532.8 380.4M580.5 313.6L567.3 336.9M311.2 236.0L361.9 246.6M443.7 189.4L497.8 201.3M318.9 372.5L355.2 396.3M838.3 322.2L800.9 299.9M318.9 372.5L377.7 368.5M482.0 149.8L530.5 175.5M682.4 352.2L633.6 373.0M480.4 175.8L497.8 201.3M377.7 368.5L399.6 341.5M590.0 174.4L556.9 154.7M311.2 236.0L265.9 252.0M444.4 212.8L474.0 238.2M832.6 362.2L774.7 353.1M169.9 256.7L168.2 285.4M697.6 415.5L688.5 385.1M582.0 242.4L532.5 247.0M532.8 380.4L477.3 370.3M482.0 149.8L480.4 175.8M369.2 273.2L378.8 296.9M169.1 356.6L228.0 352.0M637.2 238.8L617.2 263.4M508.3 490.3L460.6 477.1M314.1 325.4L363.0 319.6M195.6 328.6L260.5 318.8M396.5 422.4L478.1 424.8M234.5 403.7L294.1 400.0M355.2 396.3L377.7 368.5M532.5 247.0L507.4 267.6M787.1 328.0L774.7 353.1M542.4 223.3L582.0 242.4M582.0 242.4L617.2 263.4M637.2 238.8L601.8 218.2M323.7 295.8L378.8 296.9M525.8 320.4L477.6 296.6M524.8 351.0L464.4 336.7M497.8 201.3L474.0 238.2M268.2 427.9L329.2 424.5M688.5 385.1L642.2 403.5M578.9 362.2L524.8 351.0M688.5 385.1L682.4 352.2M542.4 223.3L497.8 201.3M547.4 440.2L539.4 409.6M307.2 209.7L262.0 225.2M214.6 297.9L260.5 318.8M565.6 197.5L601.8 218.2M106.0 311.2L168.2 285.4M214.6 297.9L267.9 281.4M260.5 318.8L314.1 325.4M565.6 197.5L542.4 223.3M137.3 333.7L165.2 310.7M351.8 194.4L400.2 204.3M377.7 368.5L426.9 391.9M623.6 194.4L590.0 174.4M657.8 214.8L637.2 238.8M657.8 214.8L601.8 218.2M623.6 194.4L565.6 197.5M532.5 247.0L562.5 266.4M228.0 352.0L286.5 348.6M168.2 285.4L214.6 297.9M363.0 319.6L378.8 296.9M460.6 477.1L434.9 451.0M587.1 391.9L532.8 380.4M314.1 325.4L343.1 345.9M286.5 348.6L314.1 325.4M444.4 212.8L407.8 230.0M459.3 268.0L477.6 296.6M651.8 285.3L628.3 307.7M420.4 283.7L418.1 313.0M688.5 385.1L633.6 373.0M622.9 337.9L580.5 313.6M260.5 318.8L267.9 281.4M260.3 376.1L286.5 348.6M604.3 452.4L547.4 440.2M361.9 246.6L369.2 273.2M323.7 295.8L369.2 273.2M617.2 263.4L597.3 287.9M137.3 333.7L169.1 356.6M260.5 318.8L323.7 295.8M137.3 333.7L195.6 328.6M165.2 310.7L195.6 328.6M378.8 296.9L420.4 283.7M595.7 421.8L587.1 391.9M329.2 424.5L355.2 396.3M697.6 415.5L743.2 397.5M832.6 362.2L787.1 328.0M743.2 397.5L734.2 366.7M539.4 409.6L478.1 424.8M672.5 260.0L708.0 282.2M216.3 240.8L218.7 268.1M556.9 154.7L530.5 175.5M547.4 440.2L595.7 421.8M499.4 459.2L478.1 424.8M800.9 299.9L745.8 304.6M356.3 220.1L361.9 246.6M604.3 452.4L595.7 421.8M426.9 391.9L477.3 370.3M530.5 175.5L497.8 201.3M218.7 268.1L267.9 281.4M265.9 252.0L267.9 281.4M477.3 370.3L524.8 351.0M617.2 263.4L562.5 266.4M201.5 379.9L260.3 376.1M337.5 477.7L373.1 503.3M404.1 477.3L366.2 450.0M404.1 477.3L460.6 477.1M262.0 225.2L311.2 236.0M474.0 238.2L459.3 268.0M228.0 352.0L260.5 318.8M651.8 285.3L617.2 263.4M409.4 529.4L373.1 503.3M800.9 299.9L764.2 278.1M800.9 299.9L787.1 328.0M366.2 450.0L396.5 422.4M764.2 278.1L728.1 256.6M733.6 334.6L682.9 313.8M459.2 509.7L373.1 503.3M728.1 256.6L672.5 260.0M562.5 266.4L507.4 267.6M378.8 296.9L418.1 313.0M337.5 477.7L366.2 450.0M294.1 400.0L355.2 396.3M556.9 154.7L524.4 135.3M262.0 225.2L265.9 252.0M708.0 282.2L682.9 313.8M788.2 379.7L774.7 353.1M524.4 135.3L482.0 149.8M708.0 282.2L651.8 285.3M414.8 256.5L474.0 238.2M507.4 267.6L477.6 296.6M530.5 175.5L565.6 197.5M439.2 164.5L480.4 175.8M262.0 225.2L216.3 240.8M478.1 424.8L490.3 396.3M597.3 287.9L562.5 266.4M743.2 397.5L688.5 385.1M216.3 240.8L169.9 256.7M601.8 218.2L542.4 223.3M459.2 509.7L508.3 490.3M399.6 341.5L464.4 336.7M477.3 370.3L464.4 336.7M507.4 267.6L541.6 291.6M682.4 352.2L682.9 313.8M356.3 220.1L407.8 230.0M396.5 422.4L426.9 391.9M464.4 336.7L477.6 296.6M734.2 366.7L682.4 352.2M343.1 345.9L399.6 341.5M597.3 287.9L628.3 307.7M692.7 235.5L672.5 260.0M590.0 174.4L565.6 197.5M122.9 272.8L168.2 285.4M356.3 220.1L400.2 204.3M499.4 459.2L460.6 477.1M307.2 209.7L356.3 220.1M414.8 256.5L459.3 268.0M507.4 267.6L459.3 268.0M541.6 291.6L525.8 320.4M439.2 164.5L443.7 189.4M201.5 379.9L228.0 352.0M302.5 452.5L329.2 424.5M268.2 427.9L294.1 400.0M443.7 189.4L444.4 212.8M407.8 230.0L361.9 246.6M409.4 529.4L459.2 509.7M318.9 372.5L286.5 348.6M542.4 223.3L474.0 238.2M169.1 356.6L201.5 379.9M525.8 320.4L464.4 336.7M682.9 313.8L622.9 337.9M201.5 379.9L234.5 403.7M524.8 351.0L525.8 320.4M743.2 397.5L788.2 379.7" stroke="#2a2ac0" stroke-width="0.95" fill="none" opacity="1" clip-path="url(#cR34)"/><path d="M454.8 352.7L441.8 307.5M287.5 260.4L241.6 277.3M332.1 395.9L347.7 342.7M287.5 260.4L271.1 316.5M200.0 445.2L150.7 463.2M440.3 396.1L481.9 380.4M418.1 363.7L375.4 379.7M524.1 182.3L487.7 213.0M523.5 274.7L486.0 265.2M124.8 393.5L121.0 341.6M122.9 272.8L77.9 338.3M391.9 326.4L441.8 307.5M347.7 342.7L316.1 299.9M351.8 194.4L376.3 230.0M395.7 179.4L351.8 194.4M482.0 149.8L487.7 213.0M351.8 194.4L332.0 245.2M122.9 272.8L154.4 302.7M133.9 511.6L150.7 463.2M524.1 182.3L524.4 135.3M482.0 149.8L456.5 198.7M481.9 380.4L522.9 364.9M355.5 428.0L375.4 379.7M216.3 240.8L194.6 292.8M487.7 213.0L456.5 198.7M332.0 245.2L360.2 284.6M312.3 444.3L332.1 395.9M487.7 213.0L449.7 246.4M391.9 326.4L347.7 342.7M524.4 135.3L482.0 149.8M80.4 386.9L124.8 393.5M332.1 395.9L375.4 379.7M288.4 412.1L259.6 376.3M307.2 209.7L287.5 260.4M486.0 265.2L441.8 307.5M486.0 316.3L441.8 307.5M121.0 341.6L165.4 345.9M224.2 477.5L200.0 445.2M268.6 460.8L244.6 429.1M391.9 326.4L405.3 268.4M482.0 149.8L439.2 164.5M523.5 274.7L523.8 228.8M216.3 240.8L169.9 256.7M85.4 482.2L124.1 437.3M456.5 198.7L420.1 214.7M418.1 363.7L454.8 352.7M200.0 445.2L173.6 404.6M523.8 228.8L524.1 182.3M347.7 342.7L304.1 358.5M523.2 320.0L486.0 316.3M347.7 342.7L360.2 284.6M241.6 277.3L219.0 341.8M124.8 393.5L165.4 345.9M288.4 412.1L304.1 358.5M173.6 404.6L219.0 341.8M169.9 256.7L122.9 272.8M405.3 268.4L360.2 284.6M262.0 225.2L241.6 277.3M351.8 194.4L307.2 209.7M122.9 272.8L75.3 289.1M194.6 292.8L154.4 302.7M439.2 164.5L420.1 214.7M440.3 396.1L454.8 352.7M332.1 395.9L304.1 358.5M307.2 209.7L262.0 225.2M375.4 379.7L391.9 326.4M122.9 272.8L121.0 341.6M405.3 268.4L449.7 246.4M395.7 179.4L376.3 230.0M85.4 482.2L150.7 463.2M169.9 256.7L154.4 302.7M124.8 393.5L124.1 437.3M75.3 289.1L77.9 338.3M304.1 358.5L316.1 299.9M440.3 396.1L418.1 363.7M194.6 292.8L219.0 341.8M77.9 338.3L80.4 386.9M486.0 316.3L486.0 265.2M449.7 246.4L441.8 307.5M420.1 214.7L449.7 246.4M262.0 225.2L216.3 240.8M524.1 182.3L482.0 149.8M375.4 379.7L347.7 342.7M259.6 376.3L219.0 341.8M398.1 411.9L375.4 379.7M169.9 256.7L194.6 292.8M395.7 179.4L420.1 214.7M439.2 164.5L395.7 179.4M376.3 230.0L332.0 245.2M80.4 386.9L82.9 434.9M376.3 230.0L405.3 268.4M82.9 434.9L124.8 393.5M244.6 429.1L259.6 376.3M481.9 380.4L486.0 316.3M391.9 326.4L360.2 284.6M87.8 529.0L85.4 482.2M271.1 316.5L219.0 341.8M332.1 395.9L288.4 412.1M80.4 386.9L121.0 341.6M179.4 494.5L200.0 445.2M173.6 404.6L165.4 345.9M312.3 444.3L355.5 428.0M262.0 225.2L287.5 260.4M133.9 511.6L179.4 494.5M376.3 230.0L420.1 214.7M82.9 434.9L85.4 482.2M82.9 434.9L124.1 437.3M241.6 277.3L271.1 316.5M244.6 429.1L220.7 399.1M486.0 316.3L454.8 352.7M173.6 404.6L220.7 399.1M316.1 299.9L360.2 284.6M523.8 228.8L486.0 265.2M150.7 463.2L173.6 404.6M154.4 302.7L121.0 341.6M179.4 494.5L224.2 477.5M307.2 209.7L332.0 245.2M216.3 240.8L241.6 277.3M271.1 316.5L316.1 299.9M439.2 164.5L456.5 198.7M194.6 292.8L165.4 345.9M224.2 477.5L268.6 460.8M355.5 428.0L332.1 395.9M287.5 260.4L332.0 245.2M165.4 345.9L219.0 341.8M486.0 265.2L449.7 246.4M179.4 494.5L150.7 463.2M200.0 445.2L220.7 399.1M481.9 380.4L523.2 320.0M224.2 477.5L244.6 429.1M418.1 363.7L391.9 326.4M220.7 399.1L219.0 341.8M194.6 292.8L241.6 277.3M268.6 460.8L288.4 412.1M418.1 363.7L441.8 307.5M481.9 380.4L454.8 352.7M268.6 460.8L312.3 444.3M420.1 214.7L405.3 268.4M259.6 376.3L271.1 316.5M259.6 376.3L220.7 399.1M398.1 411.9L418.1 363.7M287.5 260.4L316.1 299.9M87.8 529.0L133.9 511.6M522.9 364.9L523.2 320.0M487.7 213.0L486.0 265.2M332.0 245.2L316.1 299.9M244.6 429.1L288.4 412.1M456.5 198.7L449.7 246.4M405.3 268.4L441.8 307.5M376.3 230.0L360.2 284.6M312.3 444.3L288.4 412.1M355.5 428.0L398.1 411.9M523.8 228.8L487.7 213.0M133.9 511.6L85.4 482.2M124.8 393.5L173.6 404.6M259.6 376.3L304.1 358.5M77.9 338.3L121.0 341.6M154.4 302.7L165.4 345.9M244.6 429.1L200.0 445.2M124.1 437.3L150.7 463.2M523.5 274.7L486.0 316.3M523.2 320.0L523.5 274.7M124.1 437.3L173.6 404.6M271.1 316.5L304.1 358.5M398.1 411.9L440.3 396.1M550.7 226.7L553.0 270.1M523.8 228.8L550.7 226.7M637.7 398.1L670.8 420.5M738.1 462.9L754.9 423.1M637.7 398.1L625.2 342.0M826.8 564.0L806.0 508.3M673.3 268.8L689.6 336.4M623.6 194.4L638.3 246.8M586.6 406.6L554.5 385.5M652.3 449.6L670.8 420.5M746.0 312.9L782.8 335.3M746.0 312.9L768.7 376.4M838.3 322.2L873.7 394.8M807.0 394.6L768.7 376.4M623.6 194.4L657.8 214.8M552.3 321.0L576.1 361.2M638.3 246.8L615.6 281.1M623.6 194.4L604.0 225.2M524.1 182.3L524.4 135.3M814.1 351.3L782.8 335.3M554.5 385.5L522.9 364.9M709.4 291.1L730.1 353.9M746.0 312.9L709.4 291.1M523.5 274.7L553.0 270.1M524.1 182.3L550.7 226.7M720.3 494.2L703.8 442.2M524.4 135.3L556.9 154.7M650.6 304.4L689.6 336.4M871.1 444.0L837.0 447.4M568.7 202.7L604.0 225.2M703.8 442.2L688.2 393.3M670.8 420.5L659.4 365.6M604.6 376.8L625.2 342.0M524.1 182.3L568.7 202.7M686.0 471.7L703.8 442.2M720.3 494.2L738.1 462.9M553.0 270.1L552.3 321.0M650.6 304.4L625.2 342.0M556.9 154.7L590.0 174.4M807.0 394.6L798.3 449.0M673.3 268.8L709.4 291.1M556.9 154.7L568.7 202.7M554.5 385.5L576.1 361.2M523.5 274.7L523.8 228.8M764.2 278.1L800.9 299.9M709.4 291.1L689.6 336.4M728.1 256.6L709.4 291.1M523.8 228.8L524.1 182.3M871.1 444.0L840.4 394.8M868.6 492.7L834.4 500.3M837.0 447.4L807.0 394.6M553.0 270.1L581.3 253.7M550.7 226.7L568.7 202.7M768.7 376.4L798.3 449.0M826.8 564.0L834.4 500.3M523.2 320.0L552.3 321.0M790.7 540.3L774.4 485.0M703.8 442.2L670.8 420.5M730.1 353.9L689.6 336.4M800.9 299.9L838.3 322.2M657.8 214.8L692.7 235.5M688.2 393.3L689.6 336.4M838.3 322.2L876.3 344.9M604.0 225.2L638.3 246.8M615.6 281.1L625.2 342.0M553.0 270.1L586.8 316.8M586.6 406.6L604.6 376.8M686.0 471.7L670.8 420.5M774.4 485.0L798.3 449.0M692.7 235.5L728.1 256.6M576.1 361.2L586.8 316.8M790.7 540.3L806.0 508.3M692.7 235.5L673.3 268.8M718.0 402.8L754.9 423.1M838.3 322.2L814.1 351.3M625.2 342.0L659.4 365.6M604.6 376.8L586.8 316.8M806.0 508.3L798.3 449.0M798.3 449.0L754.9 423.1M876.3 344.9L873.7 394.8M703.8 442.2L738.1 462.9M774.4 485.0L754.9 423.1M873.7 394.8L871.1 444.0M659.4 365.6L688.2 393.3M728.1 256.6L764.2 278.1M524.1 182.3L556.9 154.7M703.8 442.2L718.0 402.8M652.3 449.6L637.7 398.1M728.1 256.6L746.0 312.9M590.0 174.4L623.6 194.4M871.1 444.0L868.6 492.7M650.6 304.4L615.6 281.1M764.2 278.1L782.8 335.3M774.4 485.0L806.0 508.3M863.6 588.0L866.1 540.7M868.6 492.7L837.0 447.4M738.1 462.9L718.0 402.8M554.5 385.5L552.3 321.0M659.4 365.6L689.6 336.4M730.1 353.9L718.0 402.8M686.0 471.7L652.3 449.6M638.3 246.8L650.6 304.4M826.8 564.0L790.7 540.3M868.6 492.7L866.1 540.7M670.8 420.5L688.2 393.3M840.4 394.8L814.1 351.3M650.6 304.4L659.4 365.6M586.8 316.8L625.2 342.0M840.4 394.8L807.0 394.6M673.3 268.8L638.3 246.8M657.8 214.8L638.3 246.8M837.0 447.4L798.3 449.0M873.7 394.8L840.4 394.8M768.7 376.4L754.9 423.1M718.0 402.8L688.2 393.3M604.6 376.8L637.7 398.1M637.7 398.1L659.4 365.6M568.7 202.7L581.3 253.7M790.7 540.3L755.2 517.1M738.1 462.9L774.4 485.0M746.0 312.9L730.1 353.9M604.0 225.2L581.3 253.7M755.2 517.1L720.3 494.2M523.8 228.8L553.0 270.1M782.8 335.3L807.0 394.6M730.1 353.9L754.9 423.1M718.0 402.8L689.6 336.4M619.2 427.9L604.6 376.8M834.4 500.3L837.0 447.4M554.5 385.5L523.2 320.0M755.2 517.1L738.1 462.9M657.8 214.8L673.3 268.8M834.4 500.3L798.3 449.0M800.9 299.9L814.1 351.3M720.3 494.2L686.0 471.7M768.7 376.4L730.1 353.9M552.3 321.0L586.8 316.8M581.3 253.7L586.8 316.8M586.6 406.6L576.1 361.2M863.6 588.0L826.8 564.0M522.9 364.9L523.2 320.0M692.7 235.5L709.4 291.1M764.2 278.1L746.0 312.9M590.0 174.4L568.7 202.7M652.3 449.6L619.2 427.9M604.0 225.2L615.6 281.1M826.8 564.0L866.1 540.7M838.3 322.2L840.4 394.8M782.8 335.3L768.7 376.4M581.3 253.7L615.6 281.1M673.3 268.8L650.6 304.4M550.7 226.7L581.3 253.7M619.2 427.9L637.7 398.1M866.1 540.7L834.4 500.3M814.1 351.3L807.0 394.6M834.4 500.3L806.0 508.3M604.6 376.8L576.1 361.2M523.2 320.0L523.5 274.7M840.4 394.8L837.0 447.4M523.5 274.7L552.3 321.0M586.8 316.8L615.6 281.1M590.0 174.4L604.0 225.2M800.9 299.9L782.8 335.3M755.2 517.1L774.4 485.0M619.2 427.9L586.6 406.6" stroke="#0808d0" stroke-width="1.15" fill="none"/><path d="M465.7 452.4L454.8 478.7M645.5 682.5L636.7 650.0M778.1 625.1L821.1 606.4M133.9 511.6L170.0 544.9M681.0 630.9L674.1 596.9M720.3 494.2L686.0 471.7M480.8 407.2L503.3 429.2M686.0 471.7L652.3 449.6M558.4 504.3L592.6 527.3M370.5 699.7L334.4 672.6M421.3 523.4L419.6 555.4M462.1 728.5L407.0 728.7M227.5 505.7L274.1 520.2M675.0 556.1L622.5 549.1M681.0 630.9L636.7 650.0M440.3 396.1L398.1 411.9M490.3 642.0L476.4 615.0M275.0 676.3L299.7 647.1M674.1 596.9L627.6 617.7M372.8 541.6L419.6 555.4M592.2 669.2L545.5 688.4M558.4 504.3L511.7 510.5M666.4 497.7L612.3 500.8M275.0 676.3L334.4 672.6M133.9 511.6L117.7 552.5M538.2 454.1L503.3 429.2M690.3 663.1L636.7 650.0M583.6 637.3L530.7 625.5M583.6 637.3L574.2 606.5M507.2 742.4L462.1 728.5M312.3 444.3L360.6 454.9M755.2 517.1L735.8 545.8M616.9 581.2L622.5 549.1M577.0 478.0L612.3 500.8M148.0 576.4L170.0 544.9M538.2 656.0L490.3 642.0M755.2 517.1L700.3 521.7M652.3 449.6L598.3 452.5M465.7 452.4L512.5 482.1M674.1 596.9L616.9 581.2M645.5 682.5L592.2 669.2M481.9 380.4L440.3 396.1M133.9 511.6L187.1 519.0M415.1 494.0L466.8 503.4M360.6 454.9L410.5 466.2M204.8 569.9L268.5 559.7M380.8 613.9L428.7 638.2M790.7 540.3L769.3 564.6M380.8 613.9L402.4 585.5M600.0 702.2L545.5 688.4M179.4 494.5L133.9 511.6M574.2 606.5L562.5 580.4M735.8 545.8L675.0 556.1M821.1 606.4L772.9 592.3M133.9 511.6L87.8 529.0M415.1 494.0L370.5 512.0M512.5 482.1L454.8 478.7M204.8 569.9L237.0 595.8M512.5 482.1L466.8 503.4M507.2 742.4L554.0 722.2M521.3 595.2L463.9 579.9M268.5 559.7L274.1 520.2M398.1 411.9L405.0 438.9M554.0 722.2L600.0 702.2M242.4 650.6L275.0 676.3M274.1 520.2L322.8 532.5M577.0 478.0L512.5 482.1M821.1 606.4L826.8 564.0M275.0 676.3L308.3 702.4M666.4 497.7L645.6 524.7M636.7 650.0L583.6 637.3M316.8 471.7L365.8 482.9M360.6 454.9L405.0 438.9M863.6 588.0L826.8 564.0M359.4 643.4L400.4 670.6M440.3 396.1L447.5 422.5M268.5 559.7L327.4 563.8M359.4 643.4L428.7 638.2M538.2 656.0L583.6 637.3M407.0 728.7L437.6 700.7M478.5 537.3L463.9 579.9M327.4 563.8L373.2 566.6M577.0 478.0L558.4 504.3M735.8 545.8L700.3 521.7M666.4 497.7L700.3 521.7M465.7 452.4L538.2 454.1M170.0 544.9L223.5 536.7M735.8 545.8L723.7 578.5M224.2 477.5L227.5 505.7M479.1 672.4L490.3 642.0M365.8 482.9L321.2 500.8M466.8 503.4L421.3 523.4M821.1 606.4L863.6 588.0M342.1 729.0L370.5 699.7M686.0 471.7L632.4 475.0M400.4 670.6L428.7 638.2M372.8 541.6L373.2 566.6M348.1 589.8L402.4 585.5M734.5 644.0L725.9 611.9M723.7 578.5L674.1 596.9M545.5 688.4L538.2 656.0M511.7 510.5L466.8 503.4M539.4 532.2L522.7 563.3M365.8 482.9L415.1 494.0M632.4 475.0L666.4 497.7M652.3 449.6L619.2 427.9M437.6 700.7L479.1 672.4M478.5 537.3L419.6 555.4M210.4 625.4L237.0 595.8M529.2 406.7L503.3 429.2M686.0 471.7L666.4 497.7M348.1 589.8L327.4 563.8M592.2 669.2L583.6 637.3M237.0 595.8L293.5 592.2M545.5 688.4L479.1 672.4M723.7 578.5L675.0 556.1M398.1 411.9L355.5 428.0M563.7 429.7L598.3 452.5M359.4 643.4L323.8 618.1M210.4 625.4L267.4 621.8M355.5 428.0L312.3 444.3M322.8 532.5L327.4 563.8M529.2 406.7L480.8 407.2M322.8 532.5L372.8 541.6M554.0 722.2L499.3 708.9M321.2 500.8L370.5 512.0M342.1 729.0L407.0 728.7M735.8 545.8L769.3 564.6M334.4 672.6L400.4 670.6M645.6 524.7L592.6 527.3M87.8 529.0L117.7 552.5M627.6 617.7L583.6 637.3M462.1 728.5L437.6 700.7M117.7 552.5L148.0 576.4M539.4 532.2L478.5 537.3M511.7 510.5L478.5 537.3M772.9 592.3L723.7 578.5M428.7 638.2L476.4 615.0M429.9 607.2L476.4 615.0M293.5 592.2L348.1 589.8M720.3 494.2L700.3 521.7M327.4 563.8L372.8 541.6M645.5 682.5L690.3 663.1M268.6 460.8L272.5 488.9M530.7 625.5L574.2 606.5M267.4 621.8L237.0 595.8M373.2 566.6L402.4 585.5M370.5 512.0L421.3 523.4M267.4 621.8L323.8 618.1M499.3 708.9L545.5 688.4M499.3 708.9L437.6 700.7M428.7 638.2L490.3 642.0M563.7 429.7L538.2 454.1M428.7 638.2L429.9 607.2M187.1 519.0L223.5 536.7M612.3 500.8L558.4 504.3M454.8 478.7L466.8 503.4M586.6 406.6L529.2 406.7M554.5 385.5L481.9 380.4M530.7 625.5L521.3 595.2M373.2 566.6L419.6 555.4M600.0 702.2L645.5 682.5M187.1 519.0L227.5 505.7M223.5 536.7L274.1 520.2M187.1 519.0L170.0 544.9M447.5 422.5L465.7 452.4M616.9 581.2L576.0 555.7M402.4 585.5L463.9 579.9M308.3 702.4L342.1 729.0M576.0 555.7L539.4 532.2M321.2 500.8L322.8 532.5M554.0 722.2L545.5 688.4M826.8 564.0L790.7 540.3M370.5 512.0L372.8 541.6M405.0 438.9L410.5 466.2M772.9 592.3L769.3 564.6M447.5 422.5L405.0 438.9M293.5 592.2L323.8 618.1M616.9 581.2L574.2 606.5M447.5 422.5L503.3 429.2M586.6 406.6L554.5 385.5M334.4 672.6L359.4 643.4M421.3 523.4L478.5 537.3M370.5 699.7L400.4 670.6M619.2 427.9L598.3 452.5M538.2 454.1L512.5 482.1M481.9 380.4L480.8 407.2M405.0 438.9L465.7 452.4M410.5 466.2L415.1 494.0M223.5 536.7L268.5 559.7M681.0 630.9L627.6 617.7M447.5 422.5L480.8 407.2M538.2 656.0L530.7 625.5M402.4 585.5L419.6 555.4M299.7 647.1L323.8 618.1M272.5 488.9L227.5 505.7M558.4 504.3L512.5 482.1M370.5 699.7L437.6 700.7M538.2 454.1L577.0 478.0M690.3 663.1L681.0 630.9M675.0 556.1L616.9 581.2M681.0 630.9L725.9 611.9M522.7 563.3L463.9 579.9M299.7 647.1L267.4 621.8M355.5 428.0L405.0 438.9M299.7 647.1L359.4 643.4M465.7 452.4L410.5 466.2M619.2 427.9L563.7 429.7M636.7 650.0L627.6 617.7M674.1 596.9L675.0 556.1M179.4 494.5L227.5 505.7M592.6 527.3L622.5 549.1M562.5 580.4L522.7 563.3M598.3 452.5L577.0 478.0M521.3 595.2L562.5 580.4M312.3 444.3L268.6 460.8M242.4 650.6L267.4 621.8M148.0 576.4L204.8 569.9M632.4 475.0L612.3 500.8M299.7 647.1L334.4 672.6M652.3 449.6L632.4 475.0M619.2 427.9L586.6 406.6M272.5 488.9L316.8 471.7M769.3 564.6L723.7 578.5M415.1 494.0L421.3 523.4M521.3 595.2L522.7 563.3M360.6 454.9L365.8 482.9M398.1 411.9L447.5 422.5M380.8 613.9L429.9 607.2M365.8 482.9L370.5 512.0M242.4 650.6L299.7 647.1M465.7 452.4L503.3 429.2M372.8 541.6L421.3 523.4M598.3 452.5L538.2 454.1M627.6 617.7L574.2 606.5M204.8 569.9L223.5 536.7M227.5 505.7L223.5 536.7M778.1 625.1L725.9 611.9M521.3 595.2L476.4 615.0M376.6 756.2L407.0 728.7M790.7 540.3L735.8 545.8M622.5 549.1L576.0 555.7M117.7 552.5L170.0 544.9M148.0 576.4L178.9 600.7M359.4 643.4L380.8 613.9M478.5 537.3L522.7 563.3M459.8 763.0L407.0 728.7M700.3 521.7L675.0 556.1M179.4 494.5L187.1 519.0M690.3 663.1L734.5 644.0M476.4 615.0L463.9 579.9M316.8 471.7L321.2 500.8M479.1 672.4L400.4 670.6M479.1 672.4L428.7 638.2M204.8 569.9L170.0 544.9M826.8 564.0L769.3 564.6M632.4 475.0L598.3 452.5M700.3 521.7L645.6 524.7M459.8 763.0L462.1 728.5M355.5 428.0L360.6 454.9M632.4 475.0L577.0 478.0M308.3 702.4L334.4 672.6M348.1 589.8L380.8 613.9M574.2 606.5L521.3 595.2M511.7 510.5L539.4 532.2M268.5 559.7L322.8 532.5M600.0 702.2L592.2 669.2M322.8 532.5L370.5 512.0M437.6 700.7L400.4 670.6M342.1 729.0L376.6 756.2M645.6 524.7L612.3 500.8M323.8 618.1L380.8 613.9M224.2 477.5L272.5 488.9M411.7 783.8L376.6 756.2M415.1 494.0L454.8 478.7M778.1 625.1L772.9 592.3M627.6 617.7L616.9 581.2M790.7 540.3L755.2 517.1M512.5 482.1L511.7 510.5M772.9 592.3L725.9 611.9M755.2 517.1L720.3 494.2M407.0 728.7L370.5 699.7M459.8 763.0L376.6 756.2M466.8 503.4L478.5 537.3M725.9 611.9L674.1 596.9M592.2 669.2L538.2 656.0M323.8 618.1L348.1 589.8M554.5 385.5L522.9 364.9M348.1 589.8L373.2 566.6M267.4 621.8L293.5 592.2M360.6 454.9L316.8 471.7M554.5 385.5L529.2 406.7M522.9 364.9L481.9 380.4M237.0 595.8L268.5 559.7M826.8 564.0L772.9 592.3M410.5 466.2L454.8 478.7M563.7 429.7L503.3 429.2M429.9 607.2L463.9 579.9M612.3 500.8L592.6 527.3M321.2 500.8L274.1 520.2M308.3 702.4L370.5 699.7M440.3 396.1L480.8 407.2M268.6 460.8L224.2 477.5M586.6 406.6L563.7 429.7M645.6 524.7L675.0 556.1M224.2 477.5L179.4 494.5M272.5 488.9L274.1 520.2M645.6 524.7L622.5 549.1M479.1 672.4L538.2 656.0M312.3 444.3L316.8 471.7M499.3 708.9L479.1 672.4M459.8 763.0L507.2 742.4M178.9 600.7L237.0 595.8M429.9 607.2L402.4 585.5M720.3 494.2L666.4 497.7M293.5 592.2L327.4 563.8M592.2 669.2L636.7 650.0M419.6 555.4L463.9 579.9M558.4 504.3L539.4 532.2M268.6 460.8L316.8 471.7M734.5 644.0L681.0 630.9M462.1 728.5L499.3 708.9M481.9 380.4L529.2 406.7M530.7 625.5L476.4 615.0M507.2 742.4L499.3 708.9M576.0 555.7L562.5 580.4M616.9 581.2L562.5 580.4M293.5 592.2L268.5 559.7M725.9 611.9L723.7 578.5M592.6 527.3L576.0 555.7M411.7 783.8L459.8 763.0M592.6 527.3L539.4 532.2M272.5 488.9L321.2 500.8M530.7 625.5L490.3 642.0M178.9 600.7L210.4 625.4M410.5 466.2L365.8 482.9M563.7 429.7L529.2 406.7M178.9 600.7L204.8 569.9M210.4 625.4L242.4 650.6M576.0 555.7L522.7 563.3M734.5 644.0L778.1 625.1" stroke="#0808d0" stroke-width="1.15" fill="none" clip-path="url(#cR27)"/><path d="M294.1 400.0L318.9 372.5M343.1 345.9L363.0 319.6M532.5 247.0L474.0 238.2M580.5 313.6L541.6 291.6M651.3 433.8L642.2 403.5M788.2 379.7L832.6 362.2M311.2 236.0L316.7 263.3M628.3 307.7L622.9 337.9M787.1 328.0L745.8 304.6M499.4 459.2L547.4 440.2M508.3 490.3L499.4 459.2M637.2 238.8L582.0 242.4M728.1 256.6L692.7 235.5M195.6 328.6L214.6 297.9M286.5 348.6L343.1 345.9M165.2 310.7L168.2 285.4M377.7 368.5L343.1 345.9M524.8 351.0L567.3 336.9M556.6 471.2L547.4 440.2M692.7 235.5L657.8 214.8M443.7 189.4L400.2 204.3M490.3 396.3L426.9 391.9M443.7 189.4L480.4 175.8M623.6 194.4L601.8 218.2M672.5 260.0L651.8 285.3M363.0 319.6L418.1 313.0M542.4 223.3L532.5 247.0M682.9 313.8L628.3 307.7M439.2 164.5L395.7 179.4M267.9 281.4L316.7 263.3M267.9 281.4L323.7 295.8M234.5 403.7L260.3 376.1M165.2 310.7L214.6 297.9M745.8 304.6L708.0 282.2M490.3 396.3L477.3 370.3M265.9 252.0L316.7 263.3M169.9 256.7L218.7 268.1M355.2 396.3L426.9 391.9M651.3 433.8L595.7 421.8M122.9 272.8L106.0 311.2M672.5 260.0L617.2 263.4M318.9 372.5L343.1 345.9M697.6 415.5L642.2 403.5M547.4 440.2L478.1 424.8M565.6 197.5L497.8 201.3M642.2 403.5L587.1 391.9M459.3 268.0L420.4 283.7M672.5 260.0L637.2 238.8M482.0 149.8L439.2 164.5M420.4 283.7L477.6 296.6M788.2 379.7L734.2 366.7M363.0 319.6L399.6 341.5M361.9 246.6L414.8 256.5M323.7 295.8L363.0 319.6M764.2 278.1L745.8 304.6M377.7 368.5L428.7 362.4M169.9 256.7L122.9 272.8M444.4 212.8L497.8 201.3M122.9 272.8L75.3 289.1M578.9 362.2L532.8 380.4M578.9 362.2L567.3 336.9M508.3 490.3L556.6 471.2M369.2 273.2L420.4 283.7M556.6 471.2L604.3 452.4M234.5 403.7L268.2 427.9M459.2 509.7L460.6 477.1M764.2 278.1L708.0 282.2M832.6 362.2L838.3 322.2M268.2 427.9L302.5 452.5M218.7 268.1L168.2 285.4M642.2 403.5L633.6 373.0M404.1 477.3L434.9 451.0M567.3 336.9L525.8 320.4M633.6 373.0L578.9 362.2M539.4 409.6L532.8 380.4M622.9 337.9L567.3 336.9M876.3 344.9L838.3 322.2M106.0 311.2L165.2 310.7M323.7 295.8L314.1 325.4M395.7 179.4L400.2 204.3M260.5 318.8L286.5 348.6M418.1 313.0L477.6 296.6M774.7 353.1L733.6 334.6M426.9 391.9L428.7 362.4M228.0 352.0L195.6 328.6M228.0 352.0L260.3 376.1M218.7 268.1L214.6 297.9M597.3 287.9L580.5 313.6M578.9 362.2L622.9 337.9M651.8 285.3L597.3 287.9M688.5 385.1L734.2 366.7M216.3 240.8L265.9 252.0M329.2 424.5L294.1 400.0M351.8 194.4L356.3 220.1M329.2 424.5L396.5 422.4M337.5 477.7L404.1 477.3M832.6 362.2L876.3 344.9M218.7 268.1L265.9 252.0M692.7 235.5L637.2 238.8M474.0 238.2L507.4 267.6M407.8 230.0L474.0 238.2M597.3 287.9L541.6 291.6M539.4 409.6L587.1 391.9M373.1 503.3L404.1 477.3M361.9 246.6L316.7 263.3M395.7 179.4L443.7 189.4M414.8 256.5L420.4 283.7M587.1 391.9L578.9 362.2M657.8 214.8L623.6 194.4M530.5 175.5L480.4 175.8M316.7 263.3L323.7 295.8M418.1 313.0L464.4 336.7M459.2 509.7L404.1 477.3M562.5 266.4L541.6 291.6M434.9 451.0L478.1 424.8M478.1 424.8L426.9 391.9M590.0 174.4L530.5 175.5M407.8 230.0L414.8 256.5M428.7 362.4L399.6 341.5M633.6 373.0L587.1 391.9M539.4 409.6L490.3 396.3M601.8 218.2L582.0 242.4M633.6 373.0L622.9 337.9M395.7 179.4L351.8 194.4M499.4 459.2L434.9 451.0M366.2 450.0L434.9 451.0M351.8 194.4L307.2 209.7M733.6 334.6L682.4 352.2M595.7 421.8L539.4 409.6M75.3 289.1L106.0 311.2M400.2 204.3L444.4 212.8M532.8 380.4L524.8 351.0M787.1 328.0L733.6 334.6M106.0 311.2L137.3 333.7M169.1 356.6L195.6 328.6M260.3 376.1L318.9 372.5M399.6 341.5L418.1 313.0M329.2 424.5L366.2 450.0M396.5 422.4L355.2 396.3M595.7 421.8L642.2 403.5M316.7 263.3L369.2 273.2M774.7 353.1L734.2 366.7M651.3 433.8L697.6 415.5M745.8 304.6L733.6 334.6M734.2 366.7L733.6 334.6M434.9 451.0L396.5 422.4M745.8 304.6L682.9 313.8M582.0 242.4L562.5 266.4M628.3 307.7L580.5 313.6M838.3 322.2L787.1 328.0M400.2 204.3L407.8 230.0M356.3 220.1L311.2 236.0M477.3 370.3L428.7 362.4M556.6 471.2L499.4 459.2M302.5 452.5L366.2 450.0M682.4 352.2L622.9 337.9M580.5 313.6L525.8 320.4M556.9 154.7L482.0 149.8M428.7 362.4L464.4 336.7M604.3 452.4L651.3 433.8M682.9 313.8L651.8 285.3M260.3 376.1L294.1 400.0M414.8 256.5L369.2 273.2M307.2 209.7L311.2 236.0M541.6 291.6L477.6 296.6M302.5 452.5L337.5 477.7M728.1 256.6L708.0 282.2M490.3 396.3L532.8 380.4M580.5 313.6L567.3 336.9M311.2 236.0L361.9 246.6M443.7 189.4L497.8 201.3M318.9 372.5L355.2 396.3M838.3 322.2L800.9 299.9M318.9 372.5L377.7 368.5M482.0 149.8L530.5 175.5M682.4 352.2L633.6 373.0M480.4 175.8L497.8 201.3M377.7 368.5L399.6 341.5M590.0 174.4L556.9 154.7M311.2 236.0L265.9 252.0M444.4 212.8L474.0 238.2M832.6 362.2L774.7 353.1M169.9 256.7L168.2 285.4M697.6 415.5L688.5 385.1M582.0 242.4L532.5 247.0M532.8 380.4L477.3 370.3M482.0 149.8L480.4 175.8M369.2 273.2L378.8 296.9M169.1 356.6L228.0 352.0M637.2 238.8L617.2 263.4M508.3 490.3L460.6 477.1M314.1 325.4L363.0 319.6M195.6 328.6L260.5 318.8M396.5 422.4L478.1 424.8M234.5 403.7L294.1 400.0M355.2 396.3L377.7 368.5M532.5 247.0L507.4 267.6M787.1 328.0L774.7 353.1M542.4 223.3L582.0 242.4M582.0 242.4L617.2 263.4M637.2 238.8L601.8 218.2M323.7 295.8L378.8 296.9M525.8 320.4L477.6 296.6M524.8 351.0L464.4 336.7M497.8 201.3L474.0 238.2M268.2 427.9L329.2 424.5M688.5 385.1L642.2 403.5M578.9 362.2L524.8 351.0M688.5 385.1L682.4 352.2M542.4 223.3L497.8 201.3M547.4 440.2L539.4 409.6M307.2 209.7L262.0 225.2M214.6 297.9L260.5 318.8M565.6 197.5L601.8 218.2M106.0 311.2L168.2 285.4M214.6 297.9L267.9 281.4M260.5 318.8L314.1 325.4M565.6 197.5L542.4 223.3M137.3 333.7L165.2 310.7M351.8 194.4L400.2 204.3M377.7 368.5L426.9 391.9M623.6 194.4L590.0 174.4M657.8 214.8L637.2 238.8M657.8 214.8L601.8 218.2M623.6 194.4L565.6 197.5M532.5 247.0L562.5 266.4M228.0 352.0L286.5 348.6M168.2 285.4L214.6 297.9M363.0 319.6L378.8 296.9M460.6 477.1L434.9 451.0M587.1 391.9L532.8 380.4M314.1 325.4L343.1 345.9M286.5 348.6L314.1 325.4M444.4 212.8L407.8 230.0M459.3 268.0L477.6 296.6M651.8 285.3L628.3 307.7M420.4 283.7L418.1 313.0M688.5 385.1L633.6 373.0M622.9 337.9L580.5 313.6M260.5 318.8L267.9 281.4M260.3 376.1L286.5 348.6M604.3 452.4L547.4 440.2M361.9 246.6L369.2 273.2M323.7 295.8L369.2 273.2M617.2 263.4L597.3 287.9M137.3 333.7L169.1 356.6M260.5 318.8L323.7 295.8M137.3 333.7L195.6 328.6M165.2 310.7L195.6 328.6M378.8 296.9L420.4 283.7M595.7 421.8L587.1 391.9M329.2 424.5L355.2 396.3M697.6 415.5L743.2 397.5M832.6 362.2L787.1 328.0M743.2 397.5L734.2 366.7M539.4 409.6L478.1 424.8M672.5 260.0L708.0 282.2M216.3 240.8L218.7 268.1M556.9 154.7L530.5 175.5M547.4 440.2L595.7 421.8M499.4 459.2L478.1 424.8M800.9 299.9L745.8 304.6M356.3 220.1L361.9 246.6M604.3 452.4L595.7 421.8M426.9 391.9L477.3 370.3M530.5 175.5L497.8 201.3M218.7 268.1L267.9 281.4M265.9 252.0L267.9 281.4M477.3 370.3L524.8 351.0M617.2 263.4L562.5 266.4M201.5 379.9L260.3 376.1M337.5 477.7L373.1 503.3M404.1 477.3L366.2 450.0M404.1 477.3L460.6 477.1M262.0 225.2L311.2 236.0M474.0 238.2L459.3 268.0M228.0 352.0L260.5 318.8M651.8 285.3L617.2 263.4M409.4 529.4L373.1 503.3M800.9 299.9L764.2 278.1M800.9 299.9L787.1 328.0M366.2 450.0L396.5 422.4M764.2 278.1L728.1 256.6M733.6 334.6L682.9 313.8M459.2 509.7L373.1 503.3M728.1 256.6L672.5 260.0M562.5 266.4L507.4 267.6M378.8 296.9L418.1 313.0M337.5 477.7L366.2 450.0M294.1 400.0L355.2 396.3M556.9 154.7L524.4 135.3M262.0 225.2L265.9 252.0M708.0 282.2L682.9 313.8M788.2 379.7L774.7 353.1M524.4 135.3L482.0 149.8M708.0 282.2L651.8 285.3M414.8 256.5L474.0 238.2M507.4 267.6L477.6 296.6M530.5 175.5L565.6 197.5M439.2 164.5L480.4 175.8M262.0 225.2L216.3 240.8M478.1 424.8L490.3 396.3M597.3 287.9L562.5 266.4M743.2 397.5L688.5 385.1M216.3 240.8L169.9 256.7M601.8 218.2L542.4 223.3M459.2 509.7L508.3 490.3M399.6 341.5L464.4 336.7M477.3 370.3L464.4 336.7M507.4 267.6L541.6 291.6M682.4 352.2L682.9 313.8M356.3 220.1L407.8 230.0M396.5 422.4L426.9 391.9M464.4 336.7L477.6 296.6M734.2 366.7L682.4 352.2M343.1 345.9L399.6 341.5M597.3 287.9L628.3 307.7M692.7 235.5L672.5 260.0M590.0 174.4L565.6 197.5M122.9 272.8L168.2 285.4M356.3 220.1L400.2 204.3M499.4 459.2L460.6 477.1M307.2 209.7L356.3 220.1M414.8 256.5L459.3 268.0M507.4 267.6L459.3 268.0M541.6 291.6L525.8 320.4M439.2 164.5L443.7 189.4M201.5 379.9L228.0 352.0M302.5 452.5L329.2 424.5M268.2 427.9L294.1 400.0M443.7 189.4L444.4 212.8M407.8 230.0L361.9 246.6M409.4 529.4L459.2 509.7M318.9 372.5L286.5 348.6M542.4 223.3L474.0 238.2M169.1 356.6L201.5 379.9M525.8 320.4L464.4 336.7M682.9 313.8L622.9 337.9M201.5 379.9L234.5 403.7M524.8 351.0L525.8 320.4M743.2 397.5L788.2 379.7" stroke="#0808d0" stroke-width="1.15" fill="none" clip-path="url(#cR5)"/><path d="M191.4 478.1L182.4 241.4M787.5 522.5L797.5 283.2M530.5 749.2L202.5 502.0M325.5 732.6L772.2 544.8M301.6 436.7L296.2 202.5M700.5 465.9L707.6 230.0M645.1 699.3L312.6 460.2M243.0 667.3L685.6 487.7M408.5 396.6L406.4 165.0M617.2 411.6L621.5 179.1M755.8 651.1L419.4 419.7M164.1 604.9L602.5 433.0M71.2 403.1L512.6 244.9M884.8 462.2L538.1 246.6" fill="none" stroke="#707878" stroke-width="0.8" opacity="0.12"/><path d="M75.3 289.1L409.4 529.4M409.4 529.4L876.3 344.9" stroke="#5a60d8" stroke-width="3" fill="none" opacity="0.6"/><path d="M409.4 529.4L411.7 783.8" stroke="#8a92f2" stroke-width="2.6" fill="none" opacity="0.9"/><polygon points="592.2,469.5 368.8,558.3 367.6,558.7 366.4,558.9 365.2,559.0 363.8,558.8 362.5,558.4 361.1,557.8 359.6,557.0 358.2,556.1 356.8,554.9 355.3,553.6 353.9,552.1 352.5,550.5 351.2,548.7 349.9,546.8 348.7,544.8 347.5,542.7 346.4,540.5 345.4,538.2 344.5,535.9 343.7,533.6 343.0,531.3 342.5,528.9 342.0,526.6 341.7,524.4 341.4,522.1 341.3,520.0 341.4,517.9 341.5,516.0 341.8,514.2 342.2,512.5 342.7,510.9 343.3,509.6 344.1,508.4 344.9,507.3 345.8,506.5 346.9,505.8 348.0,505.4 572.1,418.4 573.3,418.1 574.7,418.0 576.1,418.1 577.5,418.4 578.9,418.9 580.4,419.6 581.9,420.5 583.4,421.6 584.8,422.8 586.3,424.2 587.7,425.8 589.1,427.5 590.4,429.3 591.6,431.3 592.8,433.3 593.9,435.5 594.9,437.7 595.7,439.9 596.5,442.2 597.2,444.5 597.7,446.8 598.1,449.0 598.4,451.3 598.6,453.4 598.6,455.5 598.5,457.6 598.3,459.5 597.9,461.3 597.5,462.9 596.9,464.4 596.1,465.8 595.3,467.0 594.4,468.0 593.3,468.9" fill="#5860a8" opacity="0.55"/><path d="M341.3 520.0L343.3 509.6M341.3 520.0L354.6 509.2M341.3 520.0L354.8 521.6M343.3 509.6L349.2 505.1M343.3 509.6L358.7 501.5M343.3 509.6L354.6 509.2M349.2 505.1L357.4 507.9M349.2 505.1L366.0 500.6M349.2 505.1L358.7 501.5M357.4 507.9L365.8 517.1M357.4 507.9L374.6 506.8M357.4 507.9L366.0 500.6M365.8 517.1L372.0 530.4M365.8 517.1L382.2 518.4M365.8 517.1L374.6 506.8M372.0 530.4L374.5 544.2M372.0 530.4L386.7 532.4M372.0 530.4L382.2 518.4M374.5 544.2L372.4 554.6M374.5 544.2L386.8 544.9M374.5 544.2L386.7 532.4M372.4 554.6L366.4 558.9M372.4 554.6L382.6 552.6M372.4 554.6L386.8 544.9M366.4 558.9L358.2 556.1M366.4 558.9L375.3 553.3M366.4 558.9L382.6 552.6M358.2 556.1L349.9 546.8M358.2 556.1L366.7 547.0M358.2 556.1L375.3 553.3M349.9 546.8L343.7 533.6M349.9 546.8L359.2 535.5M349.9 546.8L366.7 547.0M343.7 533.6L341.3 520.0M343.7 533.6L354.8 521.6M343.7 533.6L359.2 535.5M354.6 509.2L358.7 501.5M354.6 509.2L366.9 510.0M354.6 509.2L368.9 499.6M358.7 501.5L366.0 500.6M358.7 501.5L368.9 499.6M358.7 501.5L374.9 495.1M366.0 500.6L374.6 506.8M366.0 500.6L374.9 495.1M366.0 500.6L383.1 497.9M374.6 506.8L382.2 518.4M374.6 506.8L383.1 497.9M374.6 506.8L391.5 507.1M382.2 518.4L386.7 532.4M382.2 518.4L391.5 507.1M382.2 518.4L397.7 520.3M386.7 532.4L386.8 544.9M386.7 532.4L397.7 520.3M386.7 532.4L400.1 534.0M386.8 544.9L382.6 552.6M386.8 544.9L400.1 534.0M386.8 544.9L398.0 544.4M382.6 552.6L375.3 553.3M382.6 552.6L398.0 544.4M382.6 552.6L392.0 548.8M375.3 553.3L366.7 547.0M375.3 553.3L392.0 548.8M375.3 553.3L383.7 545.9M366.7 547.0L359.2 535.5M366.7 547.0L383.7 545.9M366.7 547.0L375.4 536.7M359.2 535.5L354.8 521.6M359.2 535.5L375.4 536.7M359.2 535.5L369.3 523.6M354.8 521.6L354.6 509.2M354.8 521.6L369.3 523.6M354.8 521.6L366.9 510.0M366.9 510.0L368.9 499.6M366.9 510.0L380.1 499.3M366.9 510.0L380.2 511.7M368.9 499.6L374.9 495.1M368.9 499.6L384.2 491.6M368.9 499.6L380.1 499.3M374.9 495.1L383.1 497.9M374.9 495.1L391.6 490.6M374.9 495.1L384.2 491.6M383.1 497.9L391.5 507.1M383.1 497.9L400.2 496.8M383.1 497.9L391.6 490.6M391.5 507.1L397.7 520.3M391.5 507.1L407.8 508.4M391.5 507.1L400.2 496.8M397.7 520.3L400.1 534.0M397.7 520.3L412.2 522.3M397.7 520.3L407.8 508.4M400.1 534.0L398.0 544.4M400.1 534.0L412.4 534.8M400.1 534.0L412.2 522.3M398.0 544.4L392.0 548.8M398.0 544.4L408.1 542.4M398.0 544.4L412.4 534.8M392.0 548.8L383.7 545.9M392.0 548.8L400.7 543.2M392.0 548.8L408.1 542.4M383.7 545.9L375.4 536.7M383.7 545.9L392.1 537.0M383.7 545.9L400.7 543.2M375.4 536.7L369.3 523.6M375.4 536.7L384.6 525.5M375.4 536.7L392.1 537.0M369.3 523.6L366.9 510.0M369.3 523.6L380.2 511.7M369.3 523.6L384.6 525.5M380.1 499.3L384.2 491.6M380.1 499.3L392.3 500.1M380.1 499.3L394.3 489.7M384.2 491.6L391.6 490.6M384.2 491.6L394.3 489.7M384.2 491.6L400.3 485.3M391.6 490.6L400.2 496.8M391.6 490.6L400.3 485.3M391.6 490.6L408.6 487.9M400.2 496.8L407.8 508.4M400.2 496.8L408.6 487.9M400.2 496.8L417.0 497.1M407.8 508.4L412.2 522.3M407.8 508.4L417.0 497.1M407.8 508.4L423.2 510.3M412.2 522.3L412.4 534.8M412.2 522.3L423.2 510.3M412.2 522.3L425.6 524.0M412.4 534.8L408.1 542.4M412.4 534.8L425.6 524.0M412.4 534.8L423.4 534.4M408.1 542.4L400.7 543.2M408.1 542.4L423.4 534.4M408.1 542.4L417.4 538.7M400.7 543.2L392.1 537.0M400.7 543.2L417.4 538.7M400.7 543.2L409.1 535.9M392.1 537.0L384.6 525.5M392.1 537.0L409.1 535.9M392.1 537.0L400.7 526.7M384.6 525.5L380.2 511.7M384.6 525.5L400.7 526.7M384.6 525.5L394.6 513.7M380.2 511.7L380.1 499.3M380.2 511.7L394.6 513.7M380.2 511.7L392.3 500.1M392.3 500.1L394.3 489.7M392.3 500.1L405.4 489.4M392.3 500.1L405.5 501.8M394.3 489.7L400.3 485.3M394.3 489.7L409.6 481.7M394.3 489.7L405.4 489.4M400.3 485.3L408.6 487.9M400.3 485.3L417.0 480.8M400.3 485.3L409.6 481.7M408.6 487.9L417.0 497.1M408.6 487.9L425.7 486.9M408.6 487.9L417.0 480.8M417.0 497.1L423.2 510.3M417.0 497.1L433.2 498.4M417.0 497.1L425.7 486.9M423.2 510.3L425.6 524.0M423.2 510.3L437.6 512.3M423.2 510.3L433.2 498.4M425.6 524.0L423.4 534.4M425.6 524.0L437.7 524.8M425.6 524.0L437.6 512.3M423.4 534.4L417.4 538.7M423.4 534.4L433.4 532.4M423.4 534.4L437.7 524.8M417.4 538.7L409.1 535.9M417.4 538.7L426.0 533.2M417.4 538.7L433.4 532.4M409.1 535.9L400.7 526.7M409.1 535.9L417.4 527.0M409.1 535.9L426.0 533.2M400.7 526.7L394.6 513.7M400.7 526.7L409.9 515.5M400.7 526.7L417.4 527.0M394.6 513.7L392.3 500.1M394.6 513.7L405.5 501.8M394.6 513.7L409.9 515.5M405.4 489.4L409.6 481.7M405.4 489.4L417.4 490.3M405.4 489.4L419.6 479.9M409.6 481.7L417.0 480.8M409.6 481.7L419.6 479.9M409.6 481.7L425.6 475.4M417.0 480.8L425.7 486.9M417.0 480.8L425.6 475.4M417.0 480.8L433.9 478.1M425.7 486.9L433.2 498.4M425.7 486.9L433.9 478.1M425.7 486.9L442.4 487.2M433.2 498.4L437.6 512.3M433.2 498.4L442.4 487.2M433.2 498.4L448.6 500.4M437.6 512.3L437.7 524.8M437.6 512.3L448.6 500.4M437.6 512.3L450.9 514.0M437.7 524.8L433.4 532.4M437.7 524.8L450.9 514.0M437.7 524.8L448.6 524.3M433.4 532.4L426.0 533.2M433.4 532.4L448.6 524.3M433.4 532.4L442.5 528.7M426.0 533.2L417.4 527.0M426.0 533.2L442.5 528.7M426.0 533.2L434.2 525.9M417.4 527.0L409.9 515.5M417.4 527.0L434.2 525.9M417.4 527.0L425.9 516.8M409.9 515.5L405.5 501.8M409.9 515.5L425.9 516.8M409.9 515.5L419.7 503.8M405.5 501.8L405.4 489.4M405.5 501.8L419.7 503.8M405.5 501.8L417.4 490.3M417.4 490.3L419.6 479.9M417.4 490.3L430.5 479.7M417.4 490.3L430.6 492.0M419.6 479.9L425.6 475.4M419.6 479.9L434.7 472.0M419.6 479.9L430.5 479.7M425.6 475.4L433.9 478.1M425.6 475.4L442.2 471.0M425.6 475.4L434.7 472.0M433.9 478.1L442.4 487.2M433.9 478.1L450.9 477.0M433.9 478.1L442.2 471.0M442.4 487.2L448.6 500.4M442.4 487.2L458.5 488.5M442.4 487.2L450.9 477.0M448.6 500.4L450.9 514.0M448.6 500.4L462.8 502.4M448.6 500.4L458.5 488.5M450.9 514.0L448.6 524.3M450.9 514.0L462.9 514.8M450.9 514.0L462.8 502.4M448.6 524.3L442.5 528.7M448.6 524.3L458.5 522.4M448.6 524.3L462.9 514.8M442.5 528.7L434.2 525.9M442.5 528.7L451.0 523.2M442.5 528.7L458.5 522.4M434.2 525.9L425.9 516.8M434.2 525.9L442.4 517.1M434.2 525.9L451.0 523.2M425.9 516.8L419.7 503.8M425.9 516.8L434.9 505.7M425.9 516.8L442.4 517.1M419.7 503.8L417.4 490.3M419.7 503.8L430.6 492.0M419.7 503.8L434.9 505.7M430.5 479.7L434.7 472.0M430.5 479.7L442.4 480.6M430.5 479.7L444.6 470.2M434.7 472.0L442.2 471.0M434.7 472.0L444.6 470.2M434.7 472.0L450.7 465.7M442.2 471.0L450.9 477.0M442.2 471.0L450.7 465.7M442.2 471.0L459.1 468.3M450.9 477.0L458.5 488.5M450.9 477.0L459.1 468.3M450.9 477.0L467.5 477.4M458.5 488.5L462.8 502.4M458.5 488.5L467.5 477.4M458.5 488.5L473.7 490.5M462.8 502.4L462.9 514.8M462.8 502.4L473.7 490.5M462.8 502.4L476.0 504.0M462.9 514.8L458.5 522.4M462.9 514.8L476.0 504.0M462.9 514.8L473.7 514.4M458.5 522.4L451.0 523.2M458.5 522.4L473.7 514.4M458.5 522.4L467.5 518.8M451.0 523.2L442.4 517.1M451.0 523.2L467.5 518.8M451.0 523.2L459.2 516.1M442.4 517.1L434.9 505.7M442.4 517.1L459.2 516.1M442.4 517.1L450.8 507.0M434.9 505.7L430.6 492.0M434.9 505.7L450.8 507.0M434.9 505.7L444.7 494.0M430.6 492.0L430.5 479.7M430.6 492.0L444.7 494.0M430.6 492.0L442.4 480.6M442.4 480.6L444.6 470.2M442.4 480.6L455.4 470.0M442.4 480.6L455.4 482.3M444.6 470.2L450.7 465.7M444.6 470.2L459.7 462.3M444.6 470.2L455.4 470.0M450.7 465.7L459.1 468.3M450.7 465.7L467.2 461.3M450.7 465.7L459.7 462.3M459.1 468.3L467.5 477.4M459.1 468.3L475.9 467.3M459.1 468.3L467.2 461.3M467.5 477.4L473.7 490.5M467.5 477.4L483.5 478.7M467.5 477.4L475.9 467.3M473.7 490.5L476.0 504.0M473.7 490.5L487.9 492.5M473.7 490.5L483.5 478.7M476.0 504.0L473.7 514.4M476.0 504.0L487.8 504.9M476.0 504.0L487.9 492.5M473.7 514.4L467.5 518.8M473.7 514.4L483.5 512.5M473.7 514.4L487.8 504.9M467.5 518.8L459.2 516.1M467.5 518.8L475.9 513.4M467.5 518.8L483.5 512.5M459.2 516.1L450.8 507.0M459.2 516.1L467.3 507.3M459.2 516.1L475.9 513.4M450.8 507.0L444.7 494.0M450.8 507.0L459.8 495.9M450.8 507.0L467.3 507.3M444.7 494.0L442.4 480.6M444.7 494.0L455.4 482.3M444.7 494.0L459.8 495.9M455.4 470.0L459.7 462.3M455.4 470.0L467.2 470.9M455.4 470.0L469.5 460.6M459.7 462.3L467.2 461.3M459.7 462.3L469.5 460.6M459.7 462.3L475.6 456.0M467.2 461.3L475.9 467.3M467.2 461.3L475.6 456.0M467.2 461.3L484.0 458.6M475.9 467.3L483.5 478.7M475.9 467.3L484.0 458.6M475.9 467.3L492.4 467.6M483.5 478.7L487.9 492.5M483.5 478.7L492.4 467.6M483.5 478.7L498.6 480.7M487.9 492.5L487.8 504.9M487.9 492.5L498.6 480.7M487.9 492.5L500.9 494.2M487.8 504.9L483.5 512.5M487.8 504.9L500.9 494.2M487.8 504.9L498.5 504.5M483.5 512.5L475.9 513.4M483.5 512.5L498.5 504.5M483.5 512.5L492.3 508.9M475.9 513.4L467.3 507.3M475.9 513.4L492.3 508.9M475.9 513.4L483.9 506.2M467.3 507.3L459.8 495.9M467.3 507.3L483.9 506.2M467.3 507.3L475.6 497.2M459.8 495.9L455.4 482.3M459.8 495.9L475.6 497.2M459.8 495.9L469.5 484.3M455.4 482.3L455.4 470.0M455.4 482.3L469.5 484.3M455.4 482.3L467.2 470.9M467.2 470.9L469.5 460.6M467.2 470.9L480.1 460.3M467.2 470.9L480.1 472.6M469.5 460.6L475.6 456.0M469.5 460.6L484.5 452.7M469.5 460.6L480.1 460.3M475.6 456.0L484.0 458.6M475.6 456.0L492.0 451.6M475.6 456.0L484.5 452.7M484.0 458.6L492.4 467.6M484.0 458.6L500.8 457.6M484.0 458.6L492.0 451.6M492.4 467.6L498.6 480.7M492.4 467.6L508.3 469.0M492.4 467.6L500.8 457.6M498.6 480.7L500.9 494.2M498.6 480.7L512.7 482.7M498.6 480.7L508.3 469.0M500.9 494.2L498.5 504.5M500.9 494.2L512.6 495.1M500.9 494.2L512.7 482.7M498.5 504.5L492.3 508.9M498.5 504.5L508.2 502.7M498.5 504.5L512.6 495.1M492.3 508.9L483.9 506.2M492.3 508.9L500.6 503.6M492.3 508.9L508.2 502.7M483.9 506.2L475.6 497.2M483.9 506.2L491.9 497.5M483.9 506.2L500.6 503.6M475.6 497.2L469.5 484.3M475.6 497.2L484.4 486.2M475.6 497.2L491.9 497.5M469.5 484.3L467.2 470.9M469.5 484.3L480.1 472.6M469.5 484.3L484.4 486.2M480.1 460.3L484.5 452.7M480.1 460.3L491.9 461.3M480.1 460.3L494.1 451.0M484.5 452.7L492.0 451.6M484.5 452.7L494.1 451.0M484.5 452.7L500.3 446.5M492.0 451.6L500.8 457.6M492.0 451.6L500.3 446.5M492.0 451.6L508.7 449.0M500.8 457.6L508.3 469.0M500.8 457.6L508.7 449.0M500.8 457.6L517.2 458.0M508.3 469.0L512.7 482.7M508.3 469.0L517.2 458.0M508.3 469.0L523.4 470.9M512.7 482.7L512.6 495.1M512.7 482.7L523.4 470.9M512.7 482.7L525.6 484.4M512.6 495.1L508.2 502.7M512.6 495.1L525.6 484.4M512.6 495.1L523.2 494.8M508.2 502.7L500.6 503.6M508.2 502.7L523.2 494.8M508.2 502.7L517.0 499.1M500.6 503.6L491.9 497.5M500.6 503.6L517.0 499.1M500.6 503.6L508.5 496.5M491.9 497.5L484.4 486.2M491.9 497.5L508.5 496.5M491.9 497.5L500.2 487.5M484.4 486.2L480.1 472.6M484.4 486.2L500.2 487.5M484.4 486.2L494.1 474.7M480.1 472.6L480.1 460.3M480.1 472.6L494.1 474.7M480.1 472.6L491.9 461.3M491.9 461.3L494.1 451.0M491.9 461.3L504.7 450.8M491.9 461.3L504.6 463.0M494.1 451.0L500.3 446.5M494.1 451.0L509.1 443.1M494.1 451.0L504.7 450.8M500.3 446.5L508.7 449.0M500.3 446.5L516.7 442.1M500.3 446.5L509.1 443.1M508.7 449.0L517.2 458.0M508.7 449.0L525.4 448.0M508.7 449.0L516.7 442.1M517.2 458.0L523.4 470.9M517.2 458.0L533.0 459.3M517.2 458.0L525.4 448.0M523.4 470.9L525.6 484.4M523.4 470.9L537.3 473.0M523.4 470.9L533.0 459.3M525.6 484.4L523.2 494.8M525.6 484.4L537.2 485.3M525.6 484.4L537.3 473.0M523.2 494.8L517.0 499.1M523.2 494.8L532.7 492.9M523.2 494.8L537.2 485.3M517.0 499.1L508.5 496.5M517.0 499.1L525.1 493.8M517.0 499.1L532.7 492.9M508.5 496.5L500.2 487.5M508.5 496.5L516.4 487.8M508.5 496.5L525.1 493.8M500.2 487.5L494.1 474.7M500.2 487.5L508.9 476.6M500.2 487.5L516.4 487.8M494.1 474.7L491.9 461.3M494.1 474.7L504.6 463.0M494.1 474.7L508.9 476.6M504.7 450.8L509.1 443.1M504.7 450.8L516.3 451.8M504.7 450.8L518.6 441.5M509.1 443.1L516.7 442.1M509.1 443.1L518.6 441.5M509.1 443.1L524.8 436.9M516.7 442.1L525.4 448.0M516.7 442.1L524.8 436.9M516.7 442.1L533.3 439.4M525.4 448.0L533.0 459.3M525.4 448.0L533.3 439.4M525.4 448.0L541.8 448.3M533.0 459.3L537.3 473.0M533.0 459.3L541.8 448.3M533.0 459.3L547.9 461.3M537.3 473.0L537.2 485.3M537.3 473.0L547.9 461.3M537.3 473.0L550.1 474.7M537.2 485.3L532.7 492.9M537.2 485.3L550.1 474.7M537.2 485.3L547.7 485.0M532.7 492.9L525.1 493.8M532.7 492.9L547.7 485.0M532.7 492.9L541.4 489.4M525.1 493.8L516.4 487.8M525.1 493.8L541.4 489.4M525.1 493.8L532.9 486.8M516.4 487.8L508.9 476.6M516.4 487.8L532.9 486.8M516.4 487.8L524.6 477.9M508.9 476.6L504.6 463.0M508.9 476.6L524.6 477.9M508.9 476.6L518.5 465.1M504.6 463.0L504.7 450.8M504.6 463.0L518.5 465.1M504.6 463.0L516.3 451.8M516.3 451.8L518.6 441.5M516.3 451.8L529.1 441.3M516.3 451.8L529.0 453.5M518.6 441.5L524.8 436.9M518.6 441.5L533.5 433.6M518.6 441.5L529.1 441.3M524.8 436.9L533.3 439.4M524.8 436.9L541.1 432.6M524.8 436.9L533.5 433.6M533.3 439.4L541.8 448.3M533.3 439.4L549.9 438.4M533.3 439.4L541.1 432.6M541.8 448.3L547.9 461.3M541.8 448.3L557.5 449.7M541.8 448.3L549.9 438.4M547.9 461.3L550.1 474.7M547.9 461.3L561.8 463.4M547.9 461.3L557.5 449.7M550.1 474.7L547.7 485.0M550.1 474.7L561.6 475.6M550.1 474.7L561.8 463.4M547.7 485.0L541.4 489.4M547.7 485.0L557.1 483.3M547.7 485.0L561.6 475.6M541.4 489.4L532.9 486.8M541.4 489.4L549.5 484.2M541.4 489.4L557.1 483.3M532.9 486.8L524.6 477.9M532.9 486.8L540.7 478.2M532.9 486.8L549.5 484.2M524.6 477.9L518.5 465.1M524.6 477.9L533.2 467.0M524.6 477.9L540.7 478.2M518.5 465.1L516.3 451.8M518.5 465.1L529.0 453.5M518.5 465.1L533.2 467.0M529.1 441.3L533.5 433.6M529.1 441.3L540.6 442.3M529.1 441.3L542.9 432.0M533.5 433.6L541.1 432.6M533.5 433.6L542.9 432.0M533.5 433.6L549.2 427.5M541.1 432.6L549.9 438.4M541.1 432.6L549.2 427.5M541.1 432.6L557.7 429.9M549.9 438.4L557.5 449.7M549.9 438.4L557.7 429.9M549.9 438.4L566.2 438.8M557.5 449.7L561.8 463.4M557.5 449.7L566.2 438.8M557.5 449.7L572.3 451.7M561.8 463.4L561.6 475.6M561.8 463.4L572.3 451.7M561.8 463.4L574.4 465.1M561.6 475.6L557.1 483.3M561.6 475.6L574.4 465.1M561.6 475.6L572.0 475.4M557.1 483.3L549.5 484.2M557.1 483.3L572.0 475.4M557.1 483.3L565.7 479.8M549.5 484.2L540.7 478.2M549.5 484.2L565.7 479.8M549.5 484.2L557.2 477.2M540.7 478.2L533.2 467.0M540.7 478.2L557.2 477.2M540.7 478.2L548.8 468.4M533.2 467.0L529.0 453.5M533.2 467.0L548.8 468.4M533.2 467.0L542.7 455.6M529.0 453.5L529.1 441.3M529.0 453.5L542.7 455.6M529.0 453.5L540.6 442.3M540.6 442.3L542.9 432.0M540.6 442.3L553.3 431.9M540.6 442.3L553.1 444.1M542.9 432.0L549.2 427.5M542.9 432.0L557.7 424.2M542.9 432.0L553.3 431.9M549.2 427.5L557.7 429.9M549.2 427.5L565.4 423.1M549.2 427.5L557.7 424.2M557.7 429.9L566.2 438.8M557.7 429.9L574.2 429.0M557.7 429.9L565.4 423.1M566.2 438.8L572.3 451.7M566.2 438.8L581.8 440.2M566.2 438.8L574.2 429.0M572.3 451.7L574.4 465.1M572.3 451.7L586.1 453.8M572.3 451.7L581.8 440.2M574.4 465.1L572.0 475.4M574.4 465.1L585.9 466.0M574.4 465.1L586.1 453.8M572.0 475.4L565.7 479.8M572.0 475.4L581.3 473.7M572.0 475.4L585.9 466.0M565.7 479.8L557.2 477.2M565.7 479.8L573.6 474.6M565.7 479.8L581.3 473.7M557.2 477.2L548.8 468.4M557.2 477.2L564.9 468.7M557.2 477.2L573.6 474.6M548.8 468.4L542.7 455.6M548.8 468.4L557.4 457.5M548.8 468.4L564.9 468.7M542.7 455.6L540.6 442.3M542.7 455.6L553.1 444.1M542.7 455.6L557.4 457.5M553.3 431.9L557.7 424.2M553.3 431.9L564.6 432.9M553.3 431.9L567.0 422.6M557.7 424.2L565.4 423.1M557.7 424.2L567.0 422.6M557.7 424.2L573.3 418.1M565.4 423.1L574.2 429.0M565.4 423.1L573.3 418.1M565.4 423.1L581.9 420.5M574.2 429.0L581.8 440.2M574.2 429.0L581.9 420.5M574.2 429.0L590.4 429.3M581.8 440.2L586.1 453.8M581.8 440.2L590.4 429.3M581.8 440.2L596.5 442.2M586.1 453.8L585.9 466.0M586.1 453.8L596.5 442.2M586.1 453.8L598.6 455.5M585.9 466.0L581.3 473.7M585.9 466.0L598.6 455.5M585.9 466.0L596.1 465.8M581.3 473.7L573.6 474.6M581.3 473.7L596.1 465.8M581.3 473.7L589.8 470.2M573.6 474.6L564.9 468.7M573.6 474.6L589.8 470.2M573.6 474.6L581.2 467.7M564.9 468.7L557.4 457.5M564.9 468.7L581.2 467.7M564.9 468.7L572.8 458.9M557.4 457.5L553.1 444.1M557.4 457.5L572.8 458.9M557.4 457.5L566.8 446.2M553.1 444.1L553.3 431.9M553.1 444.1L566.8 446.2M553.1 444.1L564.6 432.9M564.6 432.9L567.0 422.6M567.0 422.6L573.3 418.1M573.3 418.1L581.9 420.5M581.9 420.5L590.4 429.3M590.4 429.3L596.5 442.2M596.5 442.2L598.6 455.5M598.6 455.5L596.1 465.8M596.1 465.8L589.8 470.2M589.8 470.2L581.2 467.7M581.2 467.7L572.8 458.9M572.8 458.9L566.8 446.2M566.8 446.2L564.6 432.9M357.8 532.0L350.6 520.8M350.6 520.8L357.6 520.0M350.6 520.8L341.3 520.0M350.6 520.8L343.3 509.6M350.6 520.8L349.2 505.1M357.8 532.0L357.6 520.0M357.6 520.0L364.9 531.2M357.6 520.0L349.2 505.1M357.6 520.0L357.4 507.9M357.6 520.0L365.8 517.1M357.8 532.0L364.9 531.2M364.9 531.2L365.1 543.3M364.9 531.2L365.8 517.1M364.9 531.2L372.0 530.4M364.9 531.2L374.5 544.2M357.8 532.0L365.1 543.3M365.1 543.3L358.0 544.1M365.1 543.3L374.5 544.2M365.1 543.3L372.4 554.6M365.1 543.3L366.4 558.9M357.8 532.0L358.0 544.1M358.0 544.1L350.8 532.8M358.0 544.1L366.4 558.9M358.0 544.1L358.2 556.1M358.0 544.1L349.9 546.8M357.8 532.0L350.8 532.8M350.8 532.8L350.6 520.8M350.8 532.8L349.9 546.8M350.8 532.8L343.7 533.6M350.8 532.8L341.3 520.0M581.6 444.2L574.3 433.4M574.3 433.4L581.7 432.4M574.3 433.4L564.6 432.9M574.3 433.4L567.0 422.6M574.3 433.4L573.3 418.1M581.6 444.2L581.7 432.4M581.7 432.4L589.0 443.2M581.7 432.4L573.3 418.1M581.7 432.4L581.9 420.5M581.7 432.4L590.4 429.3M581.6 444.2L589.0 443.2M589.0 443.2L588.8 455.0M589.0 443.2L590.4 429.3M589.0 443.2L596.5 442.2M589.0 443.2L598.6 455.5M581.6 444.2L588.8 455.0M588.8 455.0L581.4 456.0M588.8 455.0L598.6 455.5M588.8 455.0L596.1 465.8M588.8 455.0L589.8 470.2M581.6 444.2L581.4 456.0M581.4 456.0L574.1 445.2M581.4 456.0L589.8 470.2M581.4 456.0L581.2 467.7M581.4 456.0L572.8 458.9M581.6 444.2L574.1 445.2M574.1 445.2L574.3 433.4M574.1 445.2L572.8 458.9M574.1 445.2L566.8 446.2M574.1 445.2L564.6 432.9" stroke="#0606c8" stroke-width="1.1" fill="none"/><path d="M341.3 520.0L564.6 432.9M357.4 507.9L581.9 420.5M374.5 544.2L598.6 455.5M358.2 556.1L581.2 467.7" stroke="#0000f0" stroke-width="1.3" fill="none"/><path d="M347.3 505.6L571.4 418.6M591.8 469.7L368.3 558.5" stroke="#0000f0" stroke-width="2" fill="none"/><polygon points="75.3,289.1 524.4,135.3 876.3,344.9 863.6,588.0 411.7,783.8 87.8,529.0" fill="none" stroke="#0000ff" stroke-width="2"/><path d="M524.4 135.3L522.9 364.9M522.9 364.9L87.8 529.0M522.9 364.9L863.6 588.0" stroke="#0000ff" stroke-width="1.05" fill="none"/><g><line x1="47" y1="836.5" x2="47" y2="818" stroke="#0000d8" stroke-width="2.2"/><path d="M47 811.5 L43.5 820 H50.5Z" fill="#0000d8"/><line x1="47" y1="836.5" x2="34" y2="827.5" stroke="#10e010" stroke-width="2.2"/><path d="M29 824.5 L36.5 824.5 L33.5 830Z" fill="#10e010"/><line x1="47" y1="836.5" x2="63" y2="830" stroke="#f00000" stroke-width="2.2"/><path d="M70 828 L61.5 826.5 L63.5 832.5Z" fill="#f00000"/><text x="44.2" y="808.8" font-size="11" fill="#000">z</text><text x="20.5" y="824.5" font-size="11" fill="#000">y</text><text x="72.5" y="829" font-size="11" fill="#000">x</text></g><line x1="4" y1="51" x2="4" y2="881" stroke="#fafafa" stroke-width="2"/><line x1="5" y1="880.5" x2="950" y2="880.5" stroke="#f4f8fa" stroke-width="1"/><line x1="2" y1="881.5" x2="951" y2="881.5" stroke="#8c8c8c" stroke-width="1"/><rect x="0" y="882" width="951" height="5" fill="#f0f0f0"/><line x1="7" y1="886.5" x2="951" y2="886.5" stroke="#8c8c8c" stroke-width="1"/><line x1="85.5" y1="884" x2="85.5" y2="887" stroke="#9a9a9a" stroke-width="1"/><line x1="158.5" y1="884" x2="158.5" y2="887" stroke="#9a9a9a" stroke-width="1"/><line x1="191.5" y1="884" x2="191.5" y2="887" stroke="#9a9a9a" stroke-width="1"/><line x1="310.5" y1="884" x2="310.5" y2="887" stroke="#9a9a9a" stroke-width="1"/></svg></body></html>
